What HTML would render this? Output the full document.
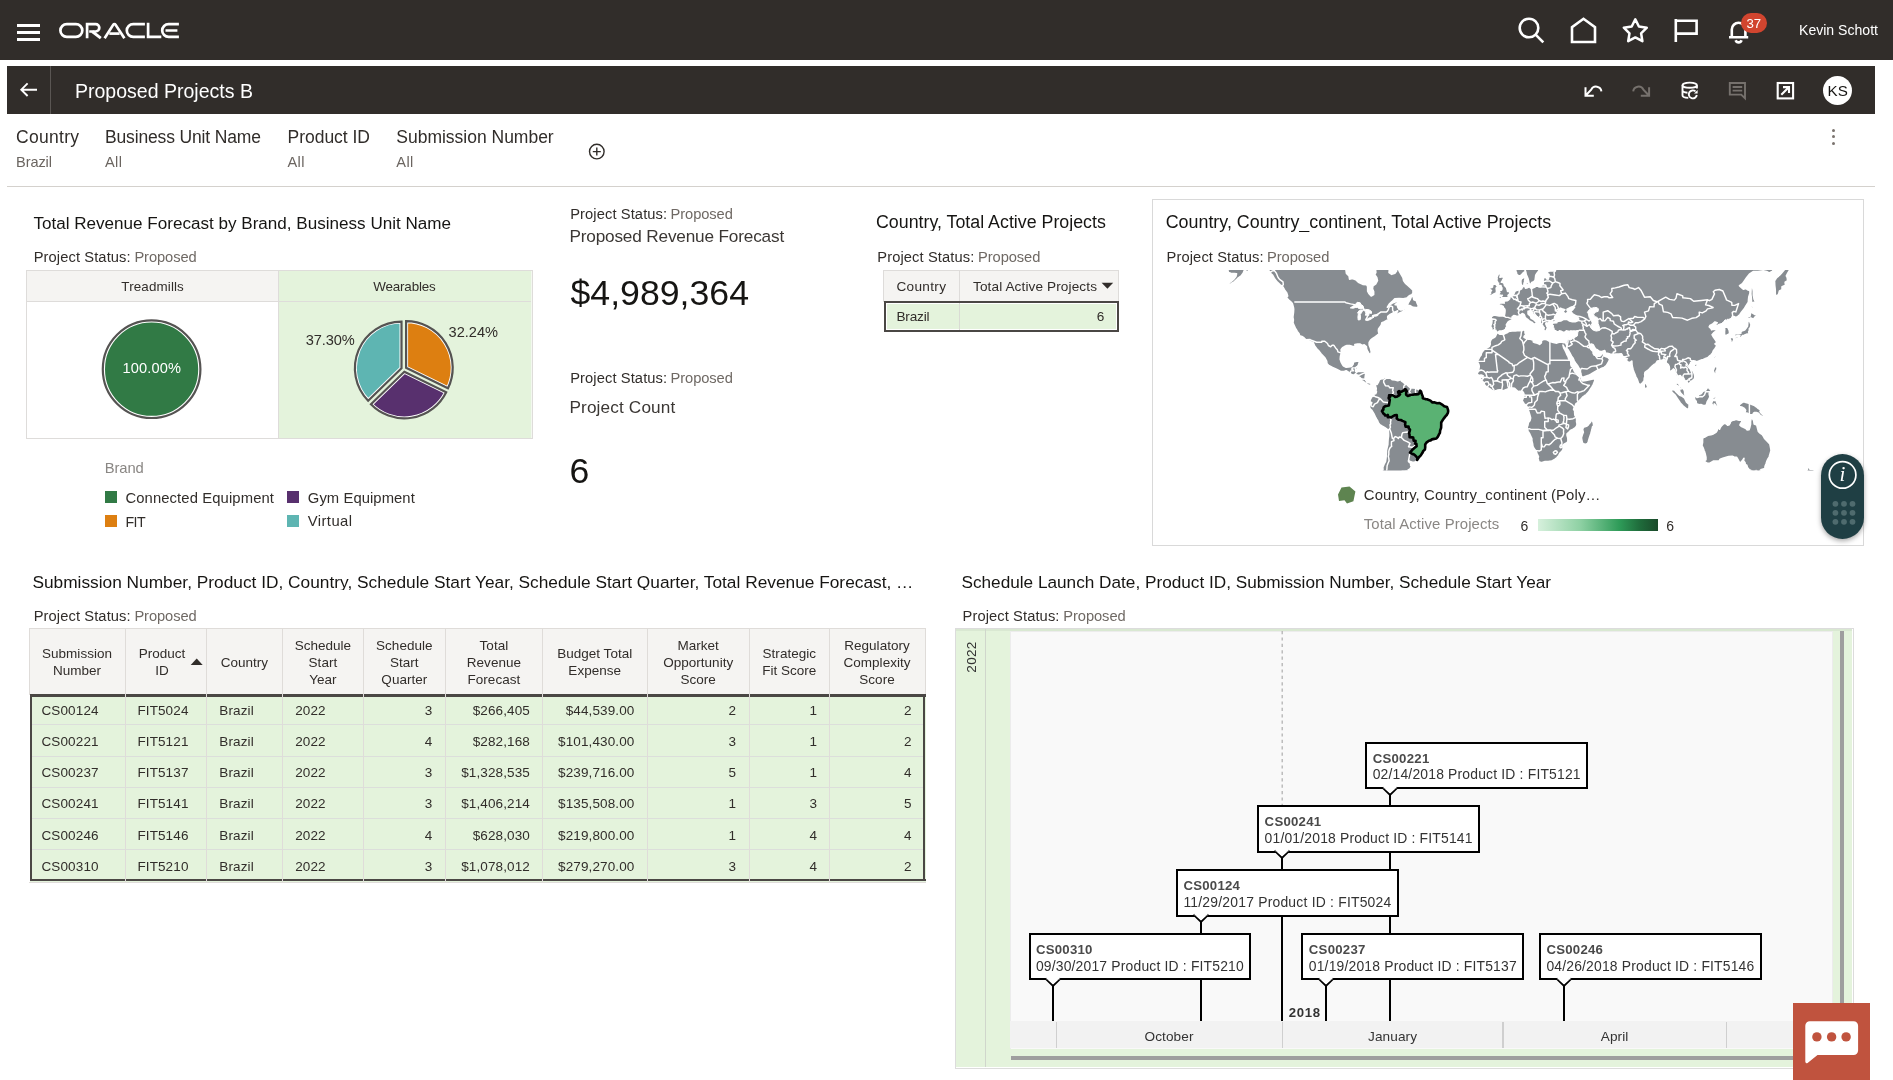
<!DOCTYPE html>
<html><head><meta charset="utf-8"><title>Proposed Projects B</title>
<style>
html,body{margin:0;padding:0;background:#fff;}
body{width:1893px;height:1080px;position:relative;overflow:hidden;font-family:"Liberation Sans",sans-serif;}
.bx{position:absolute;box-sizing:border-box;}
.t{position:absolute;white-space:nowrap;line-height:1;}
svg{overflow:visible;}
</style></head><body>
<div id="root" style="position:absolute;left:0;top:0;width:1893px;height:1080px;will-change:transform">
<!-- p_header -->
<div class="bx" style="left:0;top:0;width:1893px;height:59.5px;background:#312d2a"></div>
<div class="bx" style="left:17px;top:23.8px;width:23px;height:2.8px;background:#fff"></div>
<div class="bx" style="left:17px;top:30.9px;width:23px;height:2.8px;background:#fff"></div>
<div class="bx" style="left:17px;top:38.1px;width:23px;height:2.8px;background:#fff"></div>
<svg class="bx" style="left:55px;top:18px" width="130" height="26" viewBox="55 18 130 26" fill="none" stroke="#fff" stroke-width="2.7" stroke-linejoin="miter">
<rect x="60.4" y="24.1" width="21.9" height="12.8" rx="6.4"/>
<path d="M87.1 38.3V24.1H95.6a3.7 3.7 0 0 1 0 7.4H89.2"/>
<path d="M92.2 31.5L100.8 38.2" stroke-width="2.9"/>
<path d="M104.6 38.3L113.3 24.6a1.3 1.3 0 0 1 2.2 0L124.4 38.3" stroke-linejoin="round"/>
<path d="M109.3 33.6H119.6"/>
<path d="M144.9 24.1H133.2a6.4 6.4 0 0 0 0 12.8H144.9"/>
<path d="M148.1 22.8V36.9H161.3"/>
<path d="M178.9 24.1H168.6a6.4 6.4 0 0 0 0 12.8H178.9M165.5 30.5H177.4"/>
</svg>
<svg class="bx" style="left:1510px;top:10px" width="270" height="40" viewBox="1510 10 270 40" fill="none" stroke="#fff" stroke-width="2.6">
<circle cx="1529" cy="28" r="9.3"/><path d="M1535.6 34.6L1543.3 42.3"/>
<path d="M1572 42V27.2L1583.5 18.8L1595 27.2V42Z" stroke-linejoin="miter"/>
<path d="M1635.3 19.3L1638.9 26.5L1646.8 27.7L1641.1 33.3L1642.4 41.2L1635.3 37.4L1628.2 41.2L1629.5 33.3L1623.8 27.7L1631.7 26.5Z" stroke-width="2.5" stroke-linejoin="round"/>
<path d="M1675.8 19V42M1675.8 20.8H1696.6V33.6H1675.8"/>
<path d="M1729 37.2H1748.2M1731.8 37V29.5a6.8 6.8 0 0 1 13.6 0V37M1735.6 40.3a3.2 3.2 0 0 0 6 0" />
</svg>
<div class="bx" style="left:1740.5px;top:12.5px;width:26.5px;height:20.5px;border-radius:10.3px;background:#d1452f"></div>
<span class="t" style="left:1746.46px;top:16.88px;font-size:13.20px;color:#fff;">37</span>
<span class="t" style="left:1799.00px;top:23.34px;font-size:14.07px;color:#fff;">Kevin Schott</span>
<div class="bx" style="left:7px;top:66px;width:1868px;height:48px;background:#312d2a"></div>
<div class="bx" style="left:50px;top:66px;width:1px;height:48px;background:#5a5653"></div>
<svg class="bx" style="left:18px;top:80px" width="22" height="20" viewBox="18 80 22 20" fill="none" stroke="#fff" stroke-width="1.9"><path d="M37 89.7H21.5M27.6 83.4L21.3 89.7L27.6 96"/></svg>
<span class="t" style="left:75.00px;top:81.62px;font-size:19.53px;color:#fff;">Proposed Projects B</span>
<svg class="bx" style="left:1580px;top:76px" width="280" height="30" viewBox="1580 76 280 30" fill="none" stroke-width="2">
<g stroke="#fff">
<path d="M1585.5 87.2V95.7H1593.8M1585.9 95.3L1591.2 89.6a5.4 5.4 0 0 1 10.2 1.8"/>
</g>
<g stroke="#76716d">
<path d="M1649.1 87.2V95.7H1640.8M1648.7 95.3L1643.4 89.6a5.4 5.4 0 0 0-10.2 1.8"/>
</g>
<g stroke="#fff" stroke-width="1.9">
<ellipse cx="1689.7" cy="85.2" rx="7.2" ry="2.6"/>
<path d="M1682.5 85.2V95.2c0 1.4 2.6 2.5 5.8 2.7M1696.9 85.2V88.6M1682.5 90.2c0 1.2 2.2 2.2 5 2.5"/>
<path d="M1696.8 95a4 4 0 1 1-1.3-3.6" />
<path d="M1697.6 90V93.6H1694Z" fill="#fff" stroke="none"/>
</g>
<g stroke="#76716d" stroke-width="1.9">
<path d="M1729.8 83H1745V98.2L1741.2 94.6H1729.8Z"/><path d="M1732.6 87H1742.2M1732.6 90.6H1742.2"/>
</g>
<g stroke="#fff" stroke-width="2.1">
<rect x="1777.7" y="83" width="15.4" height="15.4"/><path d="M1781.3 94.8L1788.8 87.3M1783 87.1H1789V93.1"/>
</g>
</svg>
<div class="bx" style="left:1823px;top:75.5px;width:29px;height:29px;border-radius:50%;background:#fff"></div>
<span class="t" style="left:1827.56px;top:83.18px;font-size:15.20px;color:#161513;">KS</span>
<span class="t" style="left:16.00px;top:129.24px;font-size:17.50px;color:#312d2a;letter-spacing:0.287px;">Country</span>
<span class="t" style="left:16.00px;top:154.69px;font-size:14.60px;color:#6b6560;letter-spacing:-0.102px;">Brazil</span>
<span class="t" style="left:105.00px;top:129.24px;font-size:17.50px;color:#312d2a;letter-spacing:-0.149px;">Business Unit Name</span>
<span class="t" style="left:105.00px;top:154.69px;font-size:14.60px;color:#6b6560;letter-spacing:0.387px;">All</span>
<span class="t" style="left:287.50px;top:129.24px;font-size:17.50px;color:#312d2a;letter-spacing:-0.019px;">Product ID</span>
<span class="t" style="left:287.50px;top:154.69px;font-size:14.60px;color:#6b6560;letter-spacing:0.387px;">All</span>
<span class="t" style="left:396.30px;top:129.24px;font-size:17.50px;color:#312d2a;letter-spacing:-0.010px;">Submission Number</span>
<span class="t" style="left:396.30px;top:154.69px;font-size:14.60px;color:#6b6560;letter-spacing:0.387px;">All</span>
<svg class="bx" style="left:586px;top:141px" width="22" height="22" viewBox="586 141 22 22" fill="none" stroke="#312d2a" stroke-width="1.4"><circle cx="596.8" cy="151.6" r="7.3"/><path d="M596.8 147.6V155.6M592.8 151.6H600.8"/></svg>
<div class="bx" style="left:1832.2px;top:128.5px;width:3.2px;height:3.2px;border-radius:50%;background:#7a736e"></div>
<div class="bx" style="left:1832.2px;top:135.1px;width:3.2px;height:3.2px;border-radius:50%;background:#7a736e"></div>
<div class="bx" style="left:1832.2px;top:141.70000000000002px;width:3.2px;height:3.2px;border-radius:50%;background:#7a736e"></div>
<div class="bx" style="left:7px;top:186px;width:1868px;height:1px;background:#d4d1cd"></div>
<!-- p_pies -->
<div class="bx" style="left:33.4px;top:215.18px;height:16.72px;width:424.0px;overflow:hidden"><span class="t" style="left:0;top:0;font-size:17.09px;color:#161513">Total Revenue Forecast by Brand, Business Unit Name</span></div>
<span class="t" style="left:33.70px;top:250.41px;font-size:14.70px;color:#312d2a;letter-spacing:0.100px;">Project Status:</span><span class="t" style="left:134.40px;top:250.41px;font-size:14.70px;color:#6f6964;letter-spacing:-0.076px;">Proposed</span>
<div class="bx" style="left:26px;top:270px;width:507px;height:169px;border:1px solid #dedcda;background:#fff"></div>
<div class="bx" style="left:27px;top:271px;width:251px;height:30px;background:#f5f4f2"></div>
<div class="bx" style="left:279px;top:271px;width:252px;height:167px;background:#e4f3dc"></div>
<div class="bx" style="left:27px;top:301px;width:505px;height:1px;background:#dedcda"></div>
<div class="bx" style="left:278px;top:271px;width:1px;height:167px;background:#dedcda"></div>
<div class="bx" style="left:531px;top:271px;width:1px;height:167px;background:#f3f8ef"></div>
<span class="t" style="left:121.35px;top:280.41px;font-size:13.40px;color:#312d2a;letter-spacing:0.133px;">Treadmills</span>
<span class="t" style="left:373.25px;top:280.41px;font-size:13.40px;color:#312d2a;letter-spacing:-0.164px;">Wearables</span>
<svg class="bx" style="left:90px;top:310px" width="380" height="120" viewBox="90 310 380 120"><circle cx="151.6" cy="369.2" r="47.6" fill="#317a45" stroke="#fff" stroke-width="2"/><circle cx="151.6" cy="369.2" r="48.8" fill="none" stroke="#555352" stroke-width="2.2"/><defs><clipPath id="pc0"><path d="M406.11 367.82L406.11 321.22A46.6 46.6 0 0 1 447.97 388.30Z"/></clipPath><clipPath id="pc1"><path d="M404.31 371.77L446.17 392.24A46.6 46.6 0 0 1 370.96 404.31Z"/></clipPath><clipPath id="pc2"><path d="M401.50 368.19L368.15 400.74A46.6 46.6 0 0 1 401.50 321.59Z"/></clipPath></defs><path d="M406.11 367.82L406.11 321.22A46.6 46.6 0 0 1 447.97 388.30Z" fill="#dd7f11" stroke="#fff" stroke-width="4" clip-path="url(#pc0)"/><path d="M406.11 367.82L406.11 321.22A46.6 46.6 0 0 1 447.97 388.30Z" fill="none" stroke="#555352" stroke-width="2.2" stroke-linejoin="miter"/><path d="M404.31 371.77L446.17 392.24A46.6 46.6 0 0 1 370.96 404.31Z" fill="#58306e" stroke="#fff" stroke-width="4" clip-path="url(#pc1)"/><path d="M404.31 371.77L446.17 392.24A46.6 46.6 0 0 1 370.96 404.31Z" fill="none" stroke="#555352" stroke-width="2.2" stroke-linejoin="miter"/><path d="M401.50 368.19L368.15 400.74A46.6 46.6 0 0 1 401.50 321.59Z" fill="#5eb5b2" stroke="#fff" stroke-width="4" clip-path="url(#pc2)"/><path d="M401.50 368.19L368.15 400.74A46.6 46.6 0 0 1 401.50 321.59Z" fill="none" stroke="#555352" stroke-width="2.2" stroke-linejoin="miter"/></svg>
<span class="t" style="left:122.45px;top:361.39px;font-size:14.60px;color:#fff;letter-spacing:0.144px;">100.00%</span>
<span class="t" style="left:448.60px;top:325.09px;font-size:14.60px;color:#312d2a;letter-spacing:-0.024px;">32.24%</span>
<span class="t" style="left:305.70px;top:333.09px;font-size:14.60px;color:#312d2a;letter-spacing:-0.104px;">37.30%</span>
<span class="t" style="left:104.80px;top:461.12px;font-size:14.80px;color:#8a8784;letter-spacing:-0.124px;">Brand</span>
<div class="bx" style="left:104.8px;top:491px;width:12px;height:12px;background:#317a45"></div>
<div class="bx" style="left:286.8px;top:491px;width:12px;height:12px;background:#58306e"></div>
<div class="bx" style="left:104.8px;top:515px;width:12px;height:12px;background:#dd7f11"></div>
<div class="bx" style="left:286.8px;top:515px;width:12px;height:12px;background:#5eb5b2"></div>
<span class="t" style="left:125.40px;top:490.62px;font-size:14.80px;color:#312d2a;letter-spacing:0.119px;">Connected Equipment</span>
<span class="t" style="left:307.80px;top:490.62px;font-size:14.80px;color:#312d2a;letter-spacing:0.074px;">Gym Equipment</span>
<span class="t" style="left:125.40px;top:514.93px;font-size:14.20px;color:#312d2a;letter-spacing:-0.447px;">FIT</span>
<span class="t" style="left:307.80px;top:514.42px;font-size:14.80px;color:#312d2a;letter-spacing:0.419px;">Virtual</span>
<!-- p_kpi -->
<span class="t" style="left:570.20px;top:207.21px;font-size:14.70px;color:#312d2a;letter-spacing:0.100px;">Project Status:</span><span class="t" style="left:670.50px;top:207.21px;font-size:14.70px;color:#6f6964;letter-spacing:-0.076px;">Proposed</span>
<span class="t" style="left:569.40px;top:227.69px;font-size:17.20px;color:#3b3734;letter-spacing:-0.165px;">Proposed Revenue Forecast</span>
<span class="t" style="left:570.50px;top:275.96px;font-size:35.66px;color:#161513;">$4,989,364</span>
<span class="t" style="left:570.20px;top:370.91px;font-size:14.70px;color:#312d2a;letter-spacing:0.100px;">Project Status:</span><span class="t" style="left:670.50px;top:370.91px;font-size:14.70px;color:#6f6964;letter-spacing:-0.076px;">Proposed</span>
<span class="t" style="left:569.40px;top:398.89px;font-size:17.20px;color:#3b3734;letter-spacing:0.149px;">Project Count</span>
<span class="t" style="left:569.60px;top:454.21px;font-size:35.60px;color:#161513;">6</span>
<div class="bx" style="left:876px;top:214.17px;height:17.33px;width:236.0px;overflow:hidden"><span class="t" style="left:0;top:0;font-size:17.81px;color:#161513">Country, Total Active Projects</span></div>
<span class="t" style="left:877.30px;top:249.81px;font-size:14.70px;color:#312d2a;letter-spacing:0.100px;">Project Status:</span><span class="t" style="left:978.00px;top:249.81px;font-size:14.70px;color:#6f6964;letter-spacing:-0.076px;">Proposed</span>
<div class="bx" style="left:883px;top:270px;width:236px;height:32px;background:#f5f4f2;border:1px solid #dedcda"></div>
<div class="bx" style="left:959px;top:271px;width:1px;height:30px;background:#dedcda"></div>
<span class="t" style="left:896.40px;top:279.54px;font-size:13.60px;color:#312d2a;letter-spacing:0.330px;">Country</span>
<span class="t" style="left:973.00px;top:279.54px;font-size:13.60px;color:#312d2a;letter-spacing:0.115px;">Total Active Projects</span>
<svg class="bx" style="left:1101px;top:282px" width="13" height="8" viewBox="0 0 13 8"><path d="M0.6 0.8H12.2L6.4 6.7Z" fill="#312d2a"/></svg>
<div class="bx" style="left:884px;top:301px;width:234.5px;height:30.5px;background:#fff;border:2px solid #4a4744"></div>
<div class="bx" style="left:887px;top:304px;width:228.5px;height:24.5px;background:#e4f3dc"></div>
<div class="bx" style="left:959px;top:303px;width:1px;height:26.5px;background:#d9dbd4"></div>
<span class="t" style="left:896.40px;top:309.74px;font-size:13.60px;color:#312d2a;letter-spacing:-0.162px;">Brazil</span>
<span class="t" style="left:1096.74px;top:309.74px;font-size:13.60px;color:#312d2a;">6</span>
<!-- p_map -->
<div class="bx" style="left:1152px;top:199px;width:712px;height:347px;border:1px solid #d9d9d9;background:#fff"></div>
<div class="bx" style="left:1165.7px;top:214.33px;height:17.37px;width:391.5px;overflow:hidden"><span class="t" style="left:0;top:0;font-size:17.86px;color:#161513">Country, Country_continent, Total Active Projects</span></div>
<span class="t" style="left:1166.60px;top:250.01px;font-size:14.70px;color:#312d2a;letter-spacing:0.100px;">Project Status:</span><span class="t" style="left:1267.00px;top:250.01px;font-size:14.70px;color:#6f6964;letter-spacing:-0.076px;">Proposed</span>
<svg class="bx" style="left:1190px;top:270px" width="640" height="200.6" viewBox="1190 270 640 200.6"><defs><clipPath id="mapclip"><rect x="1190" y="270" width="640" height="200.6"/></clipPath></defs><g clip-path="url(#mapclip)"><path d="M1226.0 286.1L1230.8 284.0L1234.5 281.6L1237.7 278.5L1241.5 275.6L1243.2 273.3L1245.5 267.5L1227.4 267.5L1228.3 272.6L1230.8 273.3L1234.3 273.6L1236.5 273.9L1235.8 276.5L1233.8 279.1L1230.8 281.6L1227.4 284.0ZM1245.8 267.5L1245.6 271.6L1248.0 271.3L1249.8 269.6L1251.5 267.5ZM1266.4 267.1L1269.5 272.6L1272.5 275.2L1274.7 279.1L1277.3 282.2L1279.9 284.7L1282.8 287.0L1284.5 290.0L1286.7 293.1L1287.6 295.9L1286.4 297.5L1289.3 300.7L1291.6 302.6L1292.4 303.9L1293.3 307.2L1293.6 309.2L1293.4 312.6L1292.8 317.2L1293.3 320.0L1292.9 322.9L1294.0 325.4L1295.3 328.2L1296.4 330.0L1297.2 331.5L1299.0 333.8L1299.5 335.7L1301.9 336.5L1303.4 337.4L1305.6 339.6L1308.5 340.4L1309.9 341.5L1313.1 342.5L1314.6 345.9L1316.7 348.8L1319.4 351.7L1321.2 354.0L1324.8 357.8L1326.6 361.1L1326.9 363.5L1328.7 365.5L1332.5 367.5L1336.4 369.3L1340.3 371.3L1343.5 371.7L1346.1 370.8L1348.4 372.2L1350.2 373.8L1352.3 374.9L1354.9 375.7L1357.9 376.1L1358.4 376.6L1360.2 377.8L1361.6 379.3L1361.4 380.9L1363.1 381.4L1365.1 383.0L1366.5 384.2L1368.4 385.1L1370.1 385.6L1371.2 385.3L1371.0 384.0L1372.4 382.7L1374.1 383.7L1375.2 385.6L1376.2 383.4L1374.1 382.0L1372.2 381.6L1369.8 383.0L1367.7 382.5L1366.3 380.9L1365.2 379.3L1365.1 378.2L1365.4 375.6L1365.9 372.9L1363.7 371.5L1361.0 371.3L1358.1 371.3L1356.5 371.5L1357.0 369.3L1357.4 366.8L1358.4 364.8L1359.6 361.7L1357.5 360.9L1353.5 361.9L1353.0 364.2L1351.4 366.4L1348.8 366.8L1346.1 367.2L1343.8 366.1L1342.6 364.6L1341.2 362.0L1340.3 359.3L1340.5 356.5L1341.2 353.6L1341.3 351.7L1341.2 349.6L1342.6 347.8L1344.9 346.4L1347.0 345.5L1349.6 345.7L1352.3 346.4L1353.7 346.6L1355.3 346.6L1354.9 344.5L1357.5 344.1L1360.2 344.1L1362.3 345.5L1364.2 344.9L1366.3 346.6L1366.6 349.2L1367.7 351.5L1368.6 352.9L1369.6 354.2L1370.8 354.2L1371.3 351.7L1370.5 348.2L1369.2 344.9L1369.2 342.5L1370.6 340.2L1372.7 338.4L1375.0 337.0L1377.2 335.3L1379.1 334.0L1378.4 330.8L1378.6 329.1L1380.0 327.1L1381.4 324.9L1381.9 322.7L1384.5 321.8L1386.7 320.4L1388.8 320.0L1387.8 318.1L1387.8 316.5L1389.7 314.8L1392.2 313.6L1394.0 312.6L1395.7 311.7L1397.7 310.9L1395.3 315.0L1398.2 313.8L1400.8 312.6L1403.9 311.4L1405.9 309.7L1405.1 307.2L1403.4 309.7L1400.8 309.9L1398.7 308.9L1397.7 306.9L1397.4 304.9L1395.2 304.6L1398.6 302.6L1396.5 301.5L1393.1 302.6L1389.7 304.9L1387.4 307.2L1389.3 304.1L1392.2 301.5L1394.8 298.9L1399.1 298.6L1403.4 298.9L1406.8 298.1L1409.3 295.9L1411.9 294.8L1413.0 293.1L1413.0 290.2L1411.0 288.2L1408.5 285.8L1405.9 283.7L1403.7 280.7L1403.0 277.5L1401.1 274.3L1399.1 270.9L1398.2 267.1L1397.4 267.1L1396.5 270.9L1394.8 273.3L1391.7 274.3L1389.1 272.6L1389.5 267.1L1375.3 267.1L1375.8 272.6L1374.6 274.6L1376.7 277.5L1377.4 280.7L1375.8 283.7L1372.9 285.8L1372.4 288.8L1373.6 291.7L1373.6 294.5L1371.2 295.9L1368.9 293.4L1367.7 291.1L1367.7 286.7L1366.6 284.7L1362.8 284.3L1358.4 282.2L1355.8 279.7L1352.3 278.5L1349.6 279.1L1349.1 275.9L1346.5 273.3L1345.6 267.1ZM1407.1 305.7L1410.2 305.7L1413.0 307.4L1416.1 307.7L1417.8 307.9L1418.3 305.7L1417.3 303.4L1416.4 300.7L1413.9 299.7L1413.0 295.6L1411.3 296.7L1410.0 299.9L1408.5 302.3L1407.1 305.7ZM1376.2 383.4L1377.1 384.4L1378.4 382.1L1379.3 379.9L1380.5 379.0L1382.8 378.6L1385.0 377.6L1386.6 377.5L1386.4 378.1L1388.5 378.1L1389.1 377.9L1390.9 378.5L1392.2 379.7L1395.3 379.9L1397.7 380.7L1399.9 379.9L1402.7 379.7L1401.6 381.1L1404.2 382.7L1404.5 383.7L1406.2 383.9L1408.5 386.1L1410.5 387.9L1413.0 388.0L1416.1 388.2L1418.1 389.2L1420.0 390.5L1421.0 391.5L1422.0 394.8L1422.8 396.5L1422.8 398.2L1425.4 399.1L1427.0 399.2L1430.4 400.6L1432.4 402.5L1434.1 402.3L1437.1 403.2L1439.6 403.0L1442.1 404.6L1444.2 406.3L1447.0 407.0L1447.9 409.4L1448.2 411.1L1447.9 412.9L1446.7 415.0L1445.4 416.4L1444.1 418.1L1442.4 420.6L1441.2 422.5L1441.2 425.2L1441.1 427.9L1440.1 430.6L1439.9 432.8L1439.1 434.2L1437.9 436.6L1436.4 438.5L1434.2 438.9L1431.9 439.4L1430.6 440.4L1428.9 440.7L1426.4 442.6L1425.2 444.5L1425.2 447.4L1424.9 449.6L1423.3 450.9L1422.3 453.1L1420.8 455.3L1419.1 457.0L1417.1 459.8L1416.1 461.5L1414.4 462.3L1412.4 462.3L1409.6 461.3L1408.6 460.4L1408.6 461.7L1410.7 463.4L1410.7 465.3L1411.5 466.6L1410.0 469.0L1407.6 470.5L1404.2 471.2L1402.2 471.2L1402.0 474.5L1397.4 475.6L1397.4 485.1L1381.9 485.1L1382.4 473.4L1382.9 470.1L1382.8 467.2L1384.0 464.2L1385.4 461.5L1385.9 458.4L1386.2 455.3L1386.4 452.3L1386.4 450.4L1387.1 447.4L1387.8 444.5L1387.9 441.7L1388.1 438.9L1388.5 436.1L1388.5 433.3L1388.3 430.4L1386.6 429.0L1384.5 427.5L1381.9 426.1L1379.8 424.8L1378.1 422.5L1377.8 421.3L1376.4 419.0L1375.3 416.9L1374.1 414.3L1372.7 412.0L1371.7 410.3L1369.9 408.5L1369.4 406.8L1369.2 405.6L1370.6 404.2L1371.5 403.4L1371.7 402.5L1369.9 402.2L1370.1 399.9L1371.0 398.2L1371.5 396.8L1373.2 396.1L1373.6 395.4L1374.1 393.9L1375.8 393.6L1376.4 391.7L1375.8 390.5L1376.2 388.7L1375.8 387.0L1375.2 385.6ZM1496.8 333.0L1497.8 332.8L1500.0 334.2L1501.9 334.0L1503.5 334.5L1505.2 333.4L1506.9 332.8L1508.6 331.5L1512.1 330.8L1515.5 330.8L1518.9 330.4L1521.7 330.6L1523.8 329.8L1524.6 330.2L1525.8 330.4L1525.0 331.7L1525.1 333.0L1525.8 334.2L1525.5 335.3L1524.3 336.1L1524.1 337.2L1526.0 338.4L1526.7 338.6L1528.4 339.2L1529.6 339.0L1531.8 339.8L1533.2 340.2L1533.4 341.9L1535.3 342.7L1537.5 343.3L1539.6 344.3L1541.3 342.9L1541.5 340.4L1543.9 339.2L1546.6 339.6L1549.9 341.5L1553.3 342.3L1556.8 343.1L1558.5 342.3L1560.2 341.9L1561.9 342.1L1562.5 342.3L1564.5 342.7L1565.7 342.3L1566.9 345.9L1566.1 348.8L1564.7 348.2L1563.0 345.1L1563.7 347.8L1565.0 350.2L1566.2 352.7L1567.1 354.9L1568.1 356.6L1568.8 359.1L1570.4 360.2L1570.9 362.0L1570.9 364.6L1571.4 366.2L1573.1 367.5L1574.0 370.2L1574.8 371.8L1576.6 373.3L1578.3 375.0L1580.0 376.6L1581.2 377.3L1581.4 378.9L1582.6 380.8L1586.0 380.3L1589.5 379.6L1592.9 378.9L1595.0 378.4L1594.8 380.8L1593.4 384.3L1592.0 386.9L1590.3 389.5L1588.6 392.1L1586.0 394.9L1584.8 395.6L1582.6 397.3L1580.5 399.5L1578.5 401.9L1577.2 403.0L1576.0 403.8L1575.2 405.9L1574.3 407.6L1573.6 409.3L1574.7 410.9L1574.7 412.8L1575.0 415.4L1576.4 417.2L1576.7 419.8L1576.6 421.6L1577.1 424.2L1576.7 426.0L1575.4 427.8L1573.1 429.2L1570.5 430.5L1569.3 431.9L1567.1 433.8L1567.1 435.6L1567.8 437.8L1568.0 440.6L1567.4 442.5L1564.5 444.0L1563.0 445.3L1563.5 447.3L1562.8 450.2L1561.1 452.1L1560.2 452.9L1558.8 455.5L1556.8 457.8L1555.1 459.2L1552.5 460.8L1550.9 461.2L1548.2 461.5L1545.1 461.5L1541.3 462.9L1539.6 462.1L1538.5 461.7L1538.5 460.2L1537.9 458.6L1538.4 456.7L1537.2 454.1L1536.1 451.2L1535.3 450.4L1533.9 448.2L1532.9 446.3L1532.5 443.4L1531.8 440.6L1531.8 438.7L1530.6 436.0L1529.6 433.8L1528.1 431.4L1527.2 429.2L1527.2 426.9L1527.9 425.1L1528.4 422.4L1529.9 420.7L1530.6 418.0L1530.1 415.9L1529.6 414.2L1528.9 411.9L1528.1 409.5L1527.5 407.6L1526.7 406.2L1525.8 405.2L1524.1 403.8L1522.9 402.1L1522.0 400.2L1522.9 398.7L1523.4 397.3L1523.8 395.0L1523.8 393.7L1523.2 392.3L1522.2 391.3L1521.2 391.3L1519.8 391.4L1518.1 391.6L1516.4 390.0L1514.6 388.3L1512.7 388.0L1510.3 388.1L1508.6 388.7L1506.9 389.4L1505.2 390.0L1503.5 390.7L1501.7 390.2L1500.0 389.9L1497.4 390.2L1494.9 391.1L1494.0 391.4L1491.4 390.0L1489.7 388.8L1488.3 388.1L1487.1 387.1L1485.4 386.1L1484.2 384.3L1484.0 382.9L1483.2 382.2L1481.8 380.7L1480.9 379.6L1480.1 378.4L1478.2 377.5L1478.0 376.1L1478.2 375.0L1476.8 373.4L1478.0 372.0L1478.5 370.8L1478.9 368.4L1479.2 366.6L1479.0 365.0L1478.5 363.9L1477.6 362.2L1477.7 360.6L1478.9 358.3L1479.6 356.8L1481.1 354.9L1481.4 353.2L1482.1 352.1L1483.9 349.8L1484.7 349.0L1487.1 347.8L1489.4 346.3L1490.2 344.1L1490.0 341.9L1490.9 339.8L1492.3 338.2L1493.8 337.6L1495.2 336.5L1496.1 334.7ZM1591.7 419.8L1593.2 422.4L1593.8 425.6L1592.6 426.9L1591.9 430.1L1590.8 434.1L1589.5 437.8L1588.4 441.5L1587.7 443.4L1585.2 444.6L1582.6 443.4L1581.9 440.6L1581.4 437.8L1582.2 435.0L1583.3 432.3L1582.6 429.6L1583.4 427.2L1586.5 426.3L1588.1 425.1L1589.3 423.3L1590.3 422.3L1591.0 420.7ZM1515.3 267.1L1515.8 271.3L1516.4 272.6L1516.7 274.3L1518.3 275.6L1518.9 275.9L1520.7 275.6L1522.4 273.9L1523.6 272.6L1525.0 271.9L1525.1 270.2L1525.8 272.3L1526.2 274.6L1527.2 276.9L1528.1 279.1L1528.7 281.6L1529.1 283.4L1529.8 284.2L1531.3 284.0L1531.7 282.5L1533.6 281.8L1535.1 280.4L1535.5 277.5L1535.8 275.2L1537.0 273.3L1538.4 271.6L1539.4 269.6L1538.7 267.1ZM1556.8 267.1L1774.4 267.1L1772.6 271.3L1769.2 272.9L1766.6 271.6L1763.2 270.9L1758.0 271.6L1753.2 271.6L1749.4 274.3L1746.8 277.5L1744.6 280.7L1742.5 283.7L1739.6 285.8L1742.2 288.2L1743.4 289.1L1746.0 288.5L1748.2 290.0L1749.9 290.5L1750.1 293.1L1748.9 296.7L1748.6 299.4L1748.4 302.3L1746.0 305.9L1744.3 308.9L1741.7 312.1L1740.0 314.6L1737.4 316.9L1735.7 317.4L1733.9 316.5L1731.9 318.3L1730.0 320.4L1730.2 322.0L1727.1 323.8L1726.2 325.4L1727.7 327.1L1729.3 330.4L1729.6 332.6L1729.3 334.0L1727.1 335.1L1724.5 335.9L1724.5 333.6L1724.5 331.5L1724.7 329.5L1723.1 328.9L1721.9 328.2L1722.4 326.7L1722.2 324.9L1720.9 324.0L1718.5 324.9L1716.2 326.3L1715.5 324.7L1717.1 322.7L1715.0 322.0L1712.4 324.3L1709.9 325.6L1709.3 326.9L1711.2 328.7L1711.6 329.8L1713.8 329.1L1715.9 329.3L1717.8 329.8L1715.9 331.1L1714.0 332.6L1712.1 334.7L1713.3 336.8L1714.7 338.8L1716.4 341.3L1716.4 343.1L1715.0 343.9L1716.7 345.1L1716.1 347.2L1715.0 348.8L1713.3 351.1L1712.6 353.0L1711.1 354.9L1710.0 355.7L1708.1 357.4L1707.6 357.8L1704.7 358.9L1703.3 359.6L1702.1 359.8L1699.5 360.8L1697.0 361.7L1696.6 363.3L1695.8 361.3L1693.7 360.8L1692.7 361.1L1690.9 362.4L1690.3 363.9L1688.9 365.7L1690.1 367.9L1691.3 369.7L1693.2 371.1L1694.4 373.8L1694.9 376.4L1694.7 378.2L1694.0 379.4L1692.3 380.7L1690.9 381.2L1690.1 382.6L1688.4 383.8L1687.2 384.2L1687.3 382.1L1686.6 381.0L1685.1 380.8L1684.1 379.4L1683.2 378.0L1681.5 377.2L1680.4 375.7L1678.9 375.9L1678.7 378.2L1677.9 380.3L1677.5 382.9L1678.7 383.5L1679.4 385.2L1679.8 386.6L1681.5 387.3L1682.9 388.3L1684.4 390.4L1684.7 392.1L1684.7 393.8L1685.6 395.6L1686.1 396.6L1684.9 396.8L1683.2 395.6L1681.3 394.0L1679.9 392.1L1679.4 389.7L1679.1 387.8L1678.4 387.1L1677.2 385.5L1676.0 385.4L1676.0 383.5L1676.5 381.7L1676.3 379.1L1676.5 377.3L1675.8 374.7L1674.9 372.0L1674.8 370.2L1673.4 369.0L1672.4 370.2L1670.6 371.5L1669.1 371.1L1669.4 368.4L1669.1 366.4L1668.1 364.4L1666.7 363.3L1665.7 362.0L1665.0 360.2L1663.4 359.3L1662.6 360.2L1660.8 360.6L1659.1 360.8L1657.4 361.1L1656.5 362.4L1655.7 363.9L1654.0 364.6L1652.2 366.2L1650.2 368.1L1648.5 370.0L1646.6 371.3L1645.0 372.5L1644.7 374.7L1645.0 376.3L1644.3 378.2L1644.2 380.8L1642.8 382.6L1641.4 383.8L1640.2 385.0L1638.5 383.5L1638.0 381.7L1637.1 379.1L1635.7 376.6L1634.7 373.8L1633.8 372.0L1633.0 369.3L1632.1 365.7L1631.9 363.0L1631.8 361.1L1630.7 362.0L1629.0 362.6L1627.3 361.5L1625.6 359.6L1627.3 358.7L1625.2 358.0L1624.2 357.0L1622.8 356.5L1622.1 354.9L1621.3 353.8L1618.7 354.0L1616.1 354.2L1612.9 354.4L1610.1 354.0L1607.5 353.4L1605.5 353.0L1604.8 350.7L1602.4 351.3L1600.6 351.5L1598.9 351.1L1597.2 349.8L1595.5 349.0L1594.3 347.0L1593.2 344.9L1591.2 344.1L1590.3 345.1L1589.5 345.9L1590.0 347.2L1590.8 349.2L1592.0 350.4L1593.1 351.5L1593.2 353.4L1594.3 354.9L1594.6 354.6L1595.0 352.5L1595.7 354.0L1595.3 355.3L1597.2 356.1L1599.8 356.1L1600.6 355.5L1602.0 354.0L1603.2 352.7L1603.9 351.9L1603.9 354.6L1604.4 355.9L1606.7 357.0L1607.7 357.2L1609.8 359.3L1608.0 363.0L1606.3 365.7L1604.1 367.5L1601.8 368.4L1599.8 369.3L1597.2 370.4L1594.6 372.0L1591.2 374.1L1588.6 375.4L1584.3 376.8L1581.9 377.0L1581.2 375.6L1580.7 373.3L1580.2 370.6L1579.1 368.4L1577.8 366.1L1575.7 363.3L1574.3 361.1L1573.1 358.3L1571.4 355.9L1569.7 352.7L1568.0 349.8L1566.9 348.6L1566.9 345.9L1565.7 342.3L1566.2 341.7L1566.8 340.7L1567.1 339.2L1567.4 338.2L1568.0 337.0L1568.5 335.7L1568.6 333.6L1568.5 331.9L1569.2 331.3L1568.0 331.3L1566.4 330.8L1564.5 332.3L1562.8 332.3L1561.1 331.3L1559.5 330.8L1558.8 331.9L1557.1 331.9L1555.4 330.8L1554.0 330.4L1553.7 328.2L1552.5 327.4L1553.2 326.0L1552.0 324.9L1552.0 323.8L1553.3 322.9L1556.8 322.7L1556.8 321.6L1558.5 321.1L1561.1 320.9L1563.7 319.3L1567.1 319.3L1569.3 320.9L1572.3 321.6L1575.2 321.6L1578.3 320.4L1578.6 318.8L1577.4 316.9L1575.2 315.5L1572.3 313.6L1571.2 312.1L1570.2 311.4L1572.6 309.7L1574.5 307.2L1572.3 306.9L1569.7 307.9L1567.1 309.2L1567.1 310.4L1569.7 311.4L1567.8 312.1L1566.2 313.6L1564.5 313.4L1562.8 311.4L1564.9 309.7L1561.9 308.9L1560.2 308.2L1558.5 310.2L1558.0 311.7L1556.3 314.6L1555.9 316.0L1554.9 316.5L1554.5 318.1L1555.1 319.3L1555.4 320.4L1556.8 321.1L1556.6 321.6L1554.2 321.6L1552.7 322.7L1551.6 322.2L1549.9 321.8L1548.2 322.2L1548.2 323.4L1547.1 323.8L1546.3 322.7L1545.8 323.8L1546.5 325.4L1547.0 326.7L1548.2 327.8L1548.2 328.9L1547.3 328.2L1546.8 329.8L1546.1 330.8L1545.6 331.7L1544.2 330.8L1543.5 329.1L1544.2 327.8L1543.0 326.5L1542.5 325.4L1541.3 324.5L1540.3 322.9L1540.3 320.9L1540.3 319.5L1538.7 318.3L1537.0 316.9L1535.1 315.7L1533.0 314.1L1531.8 311.7L1530.8 312.6L1530.5 310.7L1528.1 311.4L1528.1 313.8L1528.6 314.6L1530.1 315.5L1531.3 318.3L1533.6 319.5L1534.8 319.5L1534.4 320.6L1536.1 321.6L1537.9 322.5L1538.7 323.6L1538.4 324.3L1537.7 323.4L1536.1 322.7L1535.5 324.3L1536.3 326.0L1535.3 327.4L1534.6 328.5L1533.7 328.2L1534.1 326.9L1534.6 326.0L1534.1 323.8L1532.7 323.4L1532.4 322.5L1531.3 322.0L1529.3 320.9L1527.9 319.7L1526.2 318.3L1525.0 317.2L1524.6 315.7L1524.1 314.6L1522.2 313.6L1520.7 314.8L1519.8 315.0L1518.3 316.5L1516.2 316.2L1513.8 315.7L1512.2 316.9L1512.4 318.3L1512.4 319.5L1510.7 320.6L1508.4 321.8L1506.9 324.0L1506.4 324.9L1507.2 326.5L1506.0 327.6L1505.7 329.1L1503.6 330.6L1501.7 331.1L1499.3 331.1L1497.8 332.3L1497.3 332.6L1496.1 331.5L1495.9 330.4L1494.2 330.0L1493.1 330.4L1491.6 330.4L1491.8 328.2L1490.7 326.7L1490.9 325.2L1491.6 323.4L1491.9 321.1L1491.6 319.0L1490.9 316.9L1492.6 315.7L1493.7 315.0L1496.6 315.5L1499.2 316.0L1500.4 315.7L1501.9 316.0L1503.8 316.0L1504.3 315.5L1504.8 312.9L1505.0 310.7L1504.8 309.2L1503.5 307.7L1503.1 306.4L1501.7 305.7L1499.3 305.2L1498.6 303.6L1500.9 302.6L1503.5 302.8L1504.1 303.1L1503.8 300.2L1504.8 301.0L1507.1 300.7L1508.6 299.7L1509.7 298.6L1509.7 297.0L1511.2 296.4L1512.7 295.6L1513.8 293.9L1514.8 291.4L1516.2 290.5L1518.8 290.0L1520.7 289.4L1521.7 288.5L1522.2 287.3L1521.7 285.6L1521.0 283.7L1520.8 280.7L1521.5 278.8L1523.9 277.2L1525.1 276.9L1525.0 279.1L1524.6 280.7L1525.6 281.0L1524.4 282.2L1523.9 284.3L1523.4 285.6L1524.1 286.7L1525.8 287.0L1525.6 288.2L1527.5 287.6L1529.3 286.7L1530.6 287.9L1531.5 288.5L1534.4 287.3L1536.1 286.1L1538.4 285.8L1539.1 287.0L1540.6 287.0L1541.3 285.6L1543.0 284.3L1543.2 283.1L1543.0 280.7L1543.7 277.8L1545.8 276.9L1546.8 278.8L1548.2 279.1L1548.9 276.5L1549.0 274.6L1547.3 273.6L1547.3 271.9L1549.4 270.9L1551.6 270.6L1555.1 270.9ZM1525.8 283.1L1527.2 282.2L1528.6 282.1L1528.6 283.4L1527.9 284.7L1527.5 285.6L1526.2 284.7ZM1776.4 297.0L1775.2 293.9L1775.2 289.7L1774.7 285.3L1774.5 280.7L1776.6 277.5L1779.5 275.2L1781.8 272.6L1784.7 269.2L1786.4 267.1L1792.4 267.1L1789.8 269.9L1788.1 272.6L1786.4 275.9L1787.3 277.5L1787.6 280.7L1785.2 282.2L1785.5 285.3L1782.1 286.7L1782.1 289.7L1779.5 291.1L1778.7 293.9ZM1751.1 287.3L1752.7 287.3L1753.4 291.1L1753.4 295.3L1754.2 299.4L1755.8 302.0L1752.9 302.6L1752.5 305.9L1753.7 307.7L1753.5 309.7L1752.0 308.2L1751.1 309.7L1751.0 305.9L1751.5 302.0L1751.3 298.1L1750.8 293.9L1751.0 290.2ZM1749.2 320.4L1750.3 322.7L1751.1 324.7L1750.5 327.6L1749.4 328.7L1749.4 330.6L1748.7 331.9L1749.2 333.2L1748.2 334.5L1747.2 334.0L1746.2 334.5L1745.6 335.5L1745.1 334.7L1744.6 335.5L1742.5 335.5L1742.4 336.1L1741.3 337.4L1740.5 338.0L1739.3 337.0L1739.4 336.1L1739.8 335.3L1738.2 335.3L1736.5 335.9L1734.8 336.1L1733.6 337.0L1732.2 337.0L1733.4 338.2L1733.9 339.2L1733.4 340.9L1732.9 342.1L1732.2 342.9L1730.8 342.3L1730.8 340.4L1730.2 339.4L1729.8 338.2L1731.2 337.4L1732.0 336.8L1732.9 335.7L1735.1 333.8L1736.2 333.6L1737.9 333.4L1739.6 333.2L1740.8 333.2L1740.8 331.9L1742.0 330.6L1743.1 329.3L1742.5 330.6L1744.6 330.0L1745.8 328.5L1747.4 326.3L1747.7 324.0L1747.7 322.5L1748.2 321.1ZM1734.1 338.0L1735.5 336.5L1737.0 335.9L1738.4 336.3L1738.6 337.2L1737.7 338.2L1736.2 338.0L1735.7 339.4L1734.6 338.8ZM1747.4 317.9L1748.2 316.2L1749.9 316.2L1750.5 313.4L1750.6 311.2L1752.7 313.1L1755.1 314.6L1756.8 313.8L1756.3 315.3L1757.7 316.2L1755.3 316.9L1753.4 319.3L1750.8 317.9L1749.4 318.6L1748.2 318.6L1749.4 319.7L1747.9 320.6ZM1497.1 299.1L1499.7 298.6L1500.9 298.9L1501.7 297.5L1503.5 297.8L1504.7 297.8L1507.4 297.5L1509.3 296.4L1509.3 295.6L1508.1 295.3L1509.7 293.9L1509.8 292.2L1509.1 291.4L1507.6 291.4L1507.4 290.2L1507.1 289.4L1506.7 287.9L1505.9 286.7L1504.5 285.3L1504.1 283.4L1503.5 282.8L1502.4 282.2L1501.4 282.2L1502.1 281.3L1502.8 280.0L1503.3 278.8L1503.8 277.5L1503.5 276.9L1501.2 276.9L1500.0 277.2L1500.2 275.9L1501.6 273.9L1498.3 273.9L1497.8 275.2L1496.9 277.2L1497.1 279.1L1496.2 280.0L1497.4 281.3L1497.3 284.0L1498.5 283.1L1498.5 285.3L1498.1 285.8L1499.3 286.1L1500.9 285.6L1501.1 286.7L1501.9 287.9L1501.7 289.7L1501.2 290.2L1499.5 290.2L1499.3 291.7L1499.8 292.5L1498.8 293.7L1497.8 294.2L1498.3 295.0L1499.7 295.0L1501.4 295.6L1502.3 295.3L1501.6 296.1L1499.7 296.1L1499.2 296.7L1498.3 298.3ZM1495.9 293.4L1496.6 291.4L1496.4 290.0L1496.2 288.2L1497.4 287.0L1497.1 285.8L1496.4 284.7L1494.3 284.0L1492.6 285.0L1491.9 286.4L1492.6 286.7L1492.1 287.3L1489.7 287.6L1489.7 289.4L1491.4 290.5L1490.6 291.4L1489.9 292.2L1490.6 293.1L1489.0 293.7L1489.4 294.8L1490.0 295.3L1492.3 295.0L1494.0 293.9ZM1644.3 382.4L1645.2 382.6L1646.6 384.3L1647.6 386.1L1647.4 387.8L1646.2 388.5L1644.8 388.7L1644.2 386.9L1644.2 385.2ZM1752.0 417.5L1753.7 420.7L1754.2 423.9L1756.8 425.1L1757.7 428.5L1758.4 431.4L1759.7 432.8L1762.3 434.5L1763.5 436.3L1764.6 438.5L1766.3 440.2L1768.0 441.9L1769.9 444.0L1770.4 446.3L1770.9 449.2L1771.1 450.6L1770.1 454.1L1769.2 457.1L1768.0 459.0L1767.1 460.8L1766.3 463.3L1765.1 466.3L1764.9 468.7L1761.5 469.5L1759.7 470.9L1758.7 472.2L1756.3 470.6L1753.7 471.5L1751.1 470.6L1749.2 469.8L1747.4 467.6L1746.8 465.4L1745.1 464.6L1745.1 462.9L1744.3 461.7L1743.9 463.5L1742.5 463.8L1743.4 461.2L1743.9 458.4L1742.5 460.6L1740.8 462.7L1739.4 462.3L1737.7 459.2L1736.5 457.3L1733.9 457.1L1732.2 456.3L1728.8 456.5L1725.3 457.6L1722.8 458.4L1720.2 459.2L1719.3 461.0L1716.7 461.0L1713.3 461.2L1709.9 463.3L1707.3 463.3L1704.9 461.9L1704.7 460.4L1705.9 459.8L1705.9 457.1L1705.2 454.1L1704.5 451.7L1704.0 450.6L1703.2 448.2L1701.9 445.7L1702.1 444.4L1702.5 442.5L1702.5 439.7L1702.6 438.4L1703.3 437.4L1704.4 437.2L1706.4 436.0L1707.8 435.2L1710.9 434.7L1713.3 433.9L1715.9 432.3L1717.1 430.5L1717.3 428.7L1718.5 427.8L1719.5 429.2L1720.2 427.4L1721.6 425.6L1723.3 423.9L1725.0 423.1L1726.7 424.2L1727.6 425.1L1728.8 424.9L1730.0 423.3L1730.5 421.6L1731.9 420.5L1733.1 420.1L1734.8 419.8L1733.9 418.6L1736.5 419.4L1739.1 420.1L1740.8 419.8L1742.2 420.1L1741.7 422.1L1740.6 423.7L1740.0 425.1L1741.7 426.5L1743.9 427.4L1746.0 428.5L1747.0 429.8L1749.1 429.6L1749.9 426.9L1750.5 424.2L1750.5 421.6L1750.8 419.8L1751.5 418.0ZM1803.9 462.1L1804.8 463.3L1807.0 465.9L1807.9 467.4L1809.3 467.6L1810.0 469.1L1812.2 469.5L1813.9 469.1L1813.6 471.1L1812.9 472.4L1811.3 472.8L1811.2 474.2L1808.4 477.8L1807.6 477.1L1808.1 474.9L1806.2 473.1L1807.2 471.5L1807.4 469.8L1807.0 467.8L1806.5 466.3L1804.6 463.8ZM1739.1 404.7L1741.7 402.8L1743.9 401.6L1746.0 402.4L1748.9 403.3L1749.4 403.5L1752.0 404.5L1754.6 405.5L1756.3 406.7L1757.7 408.0L1759.7 409.3L1761.1 410.6L1760.1 411.4L1761.8 413.7L1763.2 414.9L1764.9 416.3L1766.3 416.8L1764.9 417.3L1762.3 416.6L1760.1 415.4L1758.4 413.3L1756.3 412.5L1754.6 412.5L1753.4 413.5L1752.9 414.9L1750.3 414.9L1749.4 414.7L1747.7 413.3L1746.0 413.0L1744.3 413.5L1745.1 411.6L1745.6 410.2L1744.3 408.5L1741.7 407.1L1739.4 406.6ZM1694.4 396.4L1696.1 396.1L1698.2 396.6L1698.5 394.7L1701.3 393.5L1703.0 391.1L1705.6 390.4L1707.3 387.8L1708.7 387.1L1709.3 388.7L1711.9 390.0L1709.9 391.6L1709.2 393.8L1709.9 396.9L1709.0 399.0L1707.3 401.6L1706.4 405.0L1704.0 405.9L1701.3 404.7L1699.0 404.9L1696.4 403.8L1696.1 401.2L1694.6 399.5L1694.4 397.6ZM1670.8 389.4L1674.6 390.0L1676.7 392.5L1679.6 395.2L1681.7 395.9L1684.7 398.1L1686.6 402.1L1689.2 404.5L1688.9 409.0L1686.6 408.8L1682.9 405.9L1680.3 403.0L1677.4 398.7L1675.1 395.2L1672.0 392.5ZM1712.6 397.6L1714.7 396.8L1718.5 397.5L1721.6 396.2L1720.9 398.3L1715.9 398.1L1713.8 400.5L1715.9 400.7L1719.0 400.5L1716.6 402.3L1718.1 405.9L1717.1 407.3L1715.5 405.2L1714.2 404.0L1714.0 408.6L1712.4 408.5L1712.4 405.0L1711.4 403.6L1713.0 399.2ZM1714.3 366.6L1717.1 366.6L1717.1 369.3L1716.1 371.1L1716.1 374.1L1720.0 375.0L1720.4 377.2L1717.6 374.9L1714.8 375.0L1714.3 373.3L1713.1 370.8L1714.0 368.4ZM1715.0 354.6L1716.6 354.6L1715.9 357.4L1714.7 360.2L1713.5 358.3ZM1693.9 365.3L1695.4 363.9L1697.6 363.9L1697.0 366.1L1695.2 367.2Z" fill="#878c91" stroke="#fff" stroke-width="1.7" stroke-linejoin="round"/><path d="M1587.4 312.6L1588.6 310.4L1591.2 308.4L1594.6 307.4L1597.2 307.7L1598.4 308.9L1598.1 311.4L1595.5 312.1L1594.6 313.4L1593.4 313.8L1594.6 316.5L1597.2 317.4L1597.9 319.7L1598.1 323.8L1598.9 325.4L1599.6 328.2L1599.6 330.4L1596.3 331.1L1593.8 330.4L1592.0 329.3L1591.0 327.4L1591.2 325.4L1592.0 323.4L1592.0 322.2L1590.8 319.7L1589.1 317.4L1588.6 315.0L1588.1 313.4ZM1350.3 307.9L1353.2 308.2L1355.8 307.4L1357.5 307.4L1358.6 308.4L1362.8 308.4L1363.7 308.4L1363.1 305.9L1361.0 304.6L1360.2 302.8L1357.2 302.3L1355.3 304.6L1353.2 305.9ZM1358.2 320.0L1360.2 319.7L1360.5 316.9L1360.2 314.6L1361.9 312.1L1362.8 310.2L1361.0 309.9L1359.3 310.4L1357.5 313.1L1358.4 313.8L1357.9 316.9ZM1363.3 309.9L1365.4 309.4L1368.9 309.7L1371.5 311.4L1371.5 313.4L1369.2 313.1L1368.6 315.7L1367.3 316.9L1367.0 315.0L1365.4 315.3L1365.8 313.4L1365.6 311.7ZM1365.4 320.0L1367.2 320.6L1369.8 319.7L1372.4 318.3L1373.4 317.2L1371.2 317.4L1368.9 318.1L1366.8 319.3ZM1371.9 316.2L1373.2 316.2L1375.8 316.2L1377.9 315.5L1377.9 314.1L1375.8 314.6L1372.9 315.3ZM1363.0 360.6L1366.3 358.3L1370.6 358.0L1375.8 360.4L1380.2 362.6L1381.6 363.5L1376.7 364.2L1375.3 362.8L1369.8 360.4L1365.4 360.4ZM1731.7 318.3L1730.0 320.4L1730.2 322.0L1727.1 323.8L1726.2 325.4L1727.7 326.9L1725.3 327.6L1723.6 328.7L1723.1 328.9L1721.9 328.2L1722.4 326.7L1722.2 324.9L1720.9 324.0L1723.6 321.8L1725.2 319.7L1727.1 320.6L1727.1 319.3L1728.8 319.3L1731.5 318.3ZM1568.6 332.8L1569.9 332.1L1570.0 330.8L1572.3 330.8L1575.7 330.8L1579.8 330.2L1577.9 331.7L1577.4 335.9L1573.6 338.0L1570.2 340.2L1568.3 339.4L1568.5 338.2L1569.5 336.8L1568.8 335.5L1568.6 332.8Z" fill="#fff" stroke="#fff" stroke-width="1" stroke-linejoin="round"/><path d="M1294.8 302.0L1345.0 302.0L1345.9 302.8L1350.5 303.9L1354.7 304.6M1363.7 308.4L1363.3 309.9M1367.3 316.9L1365.9 319.3M1373.4 317.2L1372.9 315.7M1377.9 314.1L1380.7 312.1L1386.2 312.1L1387.4 311.2L1388.3 309.7L1388.8 307.9L1390.2 306.0L1391.7 306.3L1392.6 306.9L1392.6 310.2L1393.3 311.4L1394.0 312.4M1305.7 339.8L1310.1 339.4L1309.9 339.8L1316.6 342.3L1321.8 342.3L1321.8 341.3L1324.8 341.3L1327.5 343.5L1328.4 345.5L1330.7 346.8L1332.1 345.3L1333.9 345.3L1335.8 348.2L1337.3 349.8L1338.0 351.9L1340.8 352.9L1341.3 352.8M1264.4 267.1L1267.6 269.2L1270.4 272.6L1272.1 270.9L1274.4 270.6L1276.4 273.3L1278.1 277.5L1279.9 279.7L1283.0 281.9L1283.3 284.7L1282.3 285.8M1350.2 373.8L1350.2 372.4L1351.0 370.9L1353.3 370.9L1353.3 370.4L1351.6 368.9L1352.3 368.9L1352.3 367.9L1355.5 367.9L1355.5 367.6L1357.0 366.6M1355.5 367.9L1355.4 371.3L1356.0 371.3L1357.2 371.7M1353.9 375.1L1355.2 374.0L1357.2 371.7M1355.2 374.0L1356.7 374.9L1358.1 374.9L1357.9 376.1M1358.1 376.4L1359.8 375.0L1362.8 373.6L1365.9 372.9M1361.6 379.0L1365.2 379.3M1366.5 384.2L1367.1 381.7M1375.2 385.6L1376.2 383.4M1386.6 377.8L1385.4 379.0L1383.8 380.2L1383.6 382.1L1384.5 383.9L1385.4 385.8L1388.6 386.1L1389.8 387.7L1393.3 387.7L1392.6 390.5L1393.4 392.3L1392.6 393.4L1393.6 394.2L1394.2 396.1M1373.6 395.6L1375.5 396.8L1377.9 397.5L1379.7 398.4L1381.4 399.9L1383.3 402.0L1385.4 402.3L1388.3 402.5L1388.8 405.4M1371.0 404.1L1371.0 405.8L1373.2 406.8L1374.5 404.1L1377.4 402.7L1379.7 398.4M1389.5 417.1L1391.0 419.9L1390.5 422.0L1390.7 423.9L1390.0 424.8L1390.2 426.4L1390.5 427.0L1389.7 428.8L1388.1 430.3M1389.7 428.8L1390.7 431.5L1391.4 433.3L1391.9 436.1L1392.4 438.5L1393.6 438.5L1395.3 436.6L1397.0 437.2L1398.4 438.5L1399.3 437.0L1401.4 437.5L1402.0 434.2L1402.8 432.6L1407.4 432.0L1409.0 433.0M1393.6 438.5L1394.0 440.7L1391.5 441.7L1391.4 445.1L1391.7 446.5L1390.3 447.4L1389.3 449.4L1388.8 451.3L1388.8 454.3L1388.3 456.3L1388.8 458.4L1389.1 460.9L1388.1 463.0L1387.1 465.7L1386.9 469.0L1386.4 472.3M1401.4 437.5L1404.2 440.4L1407.6 441.9L1410.0 443.4L1408.5 446.8L1411.9 447.2L1412.9 447.0L1414.9 445.5L1415.1 443.8M1409.9 452.7L1409.5 455.3L1409.1 457.4L1408.6 460.2M1406.1 383.9L1403.9 386.1L1403.7 387.9L1404.7 389.2M1410.7 388.0L1410.5 389.6L1409.3 391.3L1410.2 393.0L1411.9 394.8M1416.1 388.4L1415.4 390.5L1415.7 393.0L1415.1 394.2M1503.1 334.5L1504.0 336.8L1504.8 339.8L1501.7 341.3L1500.7 343.1L1498.3 344.9L1495.7 345.7L1492.0 347.4L1492.0 350.2L1498.6 354.6L1508.9 361.9L1509.0 362.6L1512.4 364.2L1512.6 365.7L1514.2 365.4L1516.9 364.8L1519.7 362.3L1527.5 357.4L1524.6 355.5L1523.2 352.3L1523.9 349.8L1523.8 347.2L1523.3 344.5L1522.4 341.1L1519.8 338.4L1521.0 335.7L1521.2 333.6L1521.7 330.6M1523.3 344.5L1524.6 341.9L1526.7 339.8L1526.8 338.5M1492.0 349.4L1484.2 349.4M1492.0 350.2L1492.0 352.7L1486.3 352.7L1486.3 357.5L1484.5 358.3L1484.4 361.4L1477.7 361.4M1498.6 354.6L1495.5 354.6L1497.3 370.2L1497.7 370.6L1497.4 372.0L1490.9 372.0L1488.5 372.2L1487.1 371.8L1485.9 373.3M1549.9 341.6L1549.9 360.2L1570.4 360.2M1549.9 360.2L1549.9 363.9L1548.2 363.9L1548.2 364.8L1534.4 357.5L1532.7 358.3L1531.3 359.1L1527.5 357.4M1532.7 358.3L1533.6 362.0L1533.7 363.9L1533.6 369.5L1530.1 373.8L1530.3 375.2M1548.2 364.8L1548.2 371.7L1546.3 372.0L1545.6 374.7L1544.7 376.4L1545.6 380.0L1546.3 380.1M1546.3 380.1L1547.3 383.5L1549.0 383.8L1552.5 382.6L1555.1 382.8L1556.8 382.2L1558.5 382.1L1560.2 382.1L1561.9 378.2L1564.0 377.9L1563.7 380.8L1565.6 382.6M1565.6 382.6L1565.9 380.7L1567.1 379.1L1569.0 377.0L1569.5 374.1L1570.5 369.3L1573.3 367.5M1569.8 374.2L1572.1 373.1L1574.0 373.6L1576.0 374.0L1578.3 375.9L1579.8 377.3L1578.8 380.0L1580.9 380.0L1581.3 379.1M1580.9 380.0L1580.5 381.2L1581.9 382.8L1582.6 383.5L1587.7 385.2L1589.4 385.2L1584.2 390.6L1580.9 391.8L1579.0 392.2L1577.1 391.8L1574.8 393.1L1572.3 392.8L1568.8 391.3L1568.6 391.1L1567.6 389.7L1566.6 387.4L1563.7 385.5L1565.6 382.6M1579.0 392.2L1577.4 394.2L1577.4 399.0L1577.4 400.5L1578.4 401.8M1574.3 407.1L1571.7 404.3L1565.4 400.7L1559.4 400.7M1565.4 400.7L1565.2 398.8L1566.2 397.1L1567.1 395.7L1566.1 392.6L1565.4 391.8L1568.6 391.1M1565.4 391.8L1561.9 392.8L1560.0 393.0L1558.5 391.4L1555.7 391.6L1554.0 390.2L1552.5 388.7L1550.2 386.1L1547.3 383.5M1546.3 380.1L1544.2 380.7L1539.6 383.5L1537.0 385.4L1533.6 386.1M1554.0 390.2L1550.8 390.0L1547.1 391.1L1545.4 391.9L1542.2 391.4L1538.9 391.6L1538.9 393.0L1537.5 397.3L1537.3 399.9L1534.8 402.4L1534.4 405.0L1533.2 406.4L1531.7 407.4L1529.4 406.9L1527.9 407.6M1533.6 386.1L1531.8 388.7L1532.0 390.6L1532.9 392.5L1534.6 395.2L1538.9 393.0M1533.6 386.1L1532.7 383.5L1531.0 381.7L1532.9 381.7L1532.7 378.6L1531.8 376.8L1530.3 375.2M1531.3 377.3L1529.8 381.7L1528.4 384.2L1527.2 386.9L1525.0 387.1L1523.2 388.0L1521.7 390.7M1530.3 375.2L1527.5 376.3L1524.1 375.9L1520.7 375.9L1518.8 376.4L1516.4 374.9L1514.0 375.6L1513.1 378.7L1513.4 380.8L1511.7 383.5L1511.5 386.9L1511.5 388.0M1509.7 388.3L1509.7 383.5L1508.3 381.0L1508.4 380.0M1509.0 388.5L1507.9 386.1L1507.6 383.5L1506.9 380.7L1506.6 379.8M1501.6 390.2L1502.1 387.8L1502.6 384.8L1502.3 382.6L1502.1 380.0L1506.9 379.8L1508.4 380.0L1509.3 379.3L1511.0 378.4L1513.1 378.7M1494.0 391.5L1493.8 389.5L1492.5 387.8L1492.3 385.9L1493.7 384.5L1493.1 381.4L1496.2 380.8L1497.4 381.0L1500.0 382.1L1502.1 382.4M1497.4 380.9L1497.8 378.6L1499.3 377.0L1500.9 375.9L1502.6 374.3L1505.7 372.8L1507.3 373.0L1508.6 372.9L1512.9 372.2L1514.1 370.2L1514.2 365.4M1507.3 373.0L1507.2 374.7L1508.6 376.4L1510.7 377.5L1511.0 378.4M1478.5 371.1L1481.1 370.0L1483.7 370.9L1485.9 373.3L1487.3 377.5L1483.3 377.2L1478.2 377.6M1483.3 377.2L1483.3 378.7L1481.1 380.1M1487.3 377.5L1489.7 378.2L1491.4 377.5L1492.6 379.4L1493.1 381.4M1484.0 383.5L1485.4 381.9L1488.0 381.7L1488.7 383.5L1489.2 384.5L1487.1 387.1M1489.2 384.5L1490.7 384.5L1490.9 386.2L1492.3 385.9M1478.0 375.4L1481.1 375.0L1483.2 375.7L1481.1 376.1L1478.0 376.3M1523.8 395.0L1526.3 395.2L1529.8 395.2L1531.8 395.2L1534.6 395.2M1523.8 397.3L1526.3 397.3L1526.3 395.2M1529.8 395.2L1529.6 396.9L1531.5 396.9L1531.8 399.9L1531.7 402.4L1528.4 403.0L1527.0 404.2L1526.0 405.8M1528.1 409.2L1529.3 409.2L1535.5 409.2L1537.2 413.0L1540.3 412.8L1541.3 411.1L1544.4 411.6L1544.6 415.4L1545.1 418.4L1548.2 417.9L1548.2 421.6L1544.7 421.6L1544.7 427.2L1547.1 429.8M1527.2 429.1L1529.3 428.7L1531.0 429.4L1538.7 429.4L1543.0 430.5L1547.1 429.8L1550.3 430.1M1543.0 431.0L1543.0 437.8L1541.3 437.8L1541.3 443.1L1541.3 450.0L1539.6 451.0L1536.8 450.6L1535.3 450.4M1543.0 431.0L1547.0 430.5L1549.0 430.5L1550.3 430.1M1541.3 443.1L1542.5 446.9L1544.2 446.9L1545.9 444.4L1549.0 444.8L1551.3 443.1L1553.2 441.0L1555.1 439.3L1557.5 438.2L1560.7 438.5M1557.5 438.2L1555.1 436.9L1554.5 435.0L1552.0 432.3L1550.3 430.1L1553.3 430.3L1556.4 427.8L1559.2 426.2M1560.7 438.5L1562.6 436.5L1563.7 433.8L1563.5 431.4L1563.7 429.2L1561.9 427.6L1559.2 426.2L1558.8 425.1L1561.1 424.4L1564.0 423.3M1560.7 438.5L1561.9 442.5L1561.8 445.1L1562.1 446.9L1563.5 447.0M1559.9 446.9L1560.4 445.1L1561.8 445.1L1562.1 446.9L1560.7 447.8L1559.9 446.9M1553.3 452.3L1555.1 450.8L1556.6 451.0L1557.5 452.3L1555.7 454.3L1554.0 453.7L1553.3 452.3M1548.2 417.9L1550.4 418.4L1551.6 419.6L1553.7 419.1L1555.7 420.5L1556.8 422.3L1558.2 422.3L1558.2 420.1L1555.7 419.4L1556.1 415.1L1556.6 413.7L1559.8 413.2L1563.5 415.2L1565.4 415.4M1563.5 415.2L1564.0 417.7L1563.7 420.7L1563.1 422.6L1564.0 423.3L1566.2 424.2L1568.6 424.9L1568.5 426.9L1567.6 428.9L1565.9 427.4L1566.4 425.1L1566.4 423.3L1566.9 418.9L1566.4 415.4M1576.4 417.2L1573.1 418.7L1569.7 419.3L1566.9 418.9M1559.8 413.2L1557.6 410.2L1557.8 406.6L1556.8 403.6L1557.1 401.8L1557.8 401.4L1558.3 397.6L1560.7 395.2L1560.0 393.0M1557.8 406.6L1559.9 404.7L1559.9 403.0L1559.4 400.8L1557.8 401.4M1556.8 403.6L1559.9 403.1M1491.6 319.5L1492.8 319.0L1495.5 319.5L1496.2 320.2L1495.0 321.6L1495.2 323.8L1494.0 324.7L1494.9 326.0L1494.3 327.4L1494.9 328.2L1494.2 330.0M1503.8 316.1L1505.7 317.2L1508.1 317.4L1509.8 318.1L1512.4 318.3M1511.3 296.4L1512.4 297.5L1514.1 299.4L1515.2 299.1L1516.9 300.6L1517.9 300.7L1518.6 301.5L1521.0 302.0L1520.0 305.7L1517.4 308.9L1518.6 308.7L1518.9 309.9L1518.9 311.7L1518.3 312.1L1518.9 314.1L1519.8 315.0M1512.7 295.6L1514.3 295.6L1515.5 295.3L1516.9 296.1L1516.7 297.2L1517.2 297.4L1517.2 294.5L1518.6 293.9L1519.1 292.5L1519.3 290.5M1517.2 297.4L1517.7 298.6L1517.4 299.1L1516.9 300.6M1517.4 299.1L1518.1 299.9L1517.9 300.7M1521.7 285.6L1523.2 285.8M1531.5 288.5L1531.7 291.1L1532.0 292.5L1532.2 295.3L1532.7 296.7L1532.4 297.1L1531.5 296.7L1529.3 298.1L1527.7 298.6L1528.4 300.2L1530.6 302.6L1529.3 303.9L1529.3 305.7L1527.9 305.7L1525.0 305.9L1523.4 305.9L1521.5 305.7L1520.0 305.7M1518.9 309.9L1520.7 309.7L1521.5 308.9L1522.4 309.9L1522.9 308.7L1524.3 308.9L1524.9 307.6L1523.2 306.9L1523.4 305.9M1524.9 307.6L1525.8 307.7L1527.9 307.2L1528.2 307.9L1530.5 308.4L1530.3 309.9L1530.6 310.7M1530.5 308.4L1532.0 308.7L1534.6 307.6L1535.3 306.2L1536.3 304.6L1536.0 303.1L1532.7 302.0L1530.6 302.6M1532.4 297.1L1534.4 297.8L1536.0 298.3L1537.3 298.6L1539.3 300.7L1537.9 302.0L1536.1 303.1M1539.3 300.7L1541.0 301.5L1543.0 301.0L1545.7 301.8L1545.9 300.5L1548.4 297.2L1547.5 295.3L1547.7 293.7L1546.8 293.1L1548.0 292.0L1547.3 288.5L1546.1 287.0L1541.0 286.9M1546.1 287.0L1545.8 285.3L1543.5 284.7M1543.1 281.9L1546.3 281.0L1549.7 281.0L1552.7 283.1L1551.3 285.6L1550.8 287.6L1547.3 288.5M1548.9 276.2L1551.6 276.5L1553.9 277.3L1554.5 274.9L1554.0 272.6L1555.1 270.9M1553.9 277.3L1554.7 278.5L1555.4 281.6L1552.7 283.1M1555.4 281.6L1558.5 282.8L1560.0 283.4L1559.9 285.8L1561.9 288.2L1563.1 290.0L1560.7 290.8L1561.6 293.7L1559.4 295.6L1555.1 295.0L1549.9 294.2L1547.5 295.3M1561.6 293.7L1565.4 293.1L1568.0 296.7L1568.8 298.6L1572.3 299.7L1575.9 300.5L1575.4 304.6L1572.8 306.7M1545.7 301.8L1545.0 303.6L1546.3 304.6L1549.7 305.4L1552.7 304.0L1554.2 303.4L1557.0 304.9L1558.3 307.7L1558.7 308.7L1555.4 310.9L1558.0 311.7M1552.7 304.0L1555.2 307.4L1555.4 310.9M1536.3 304.6L1539.2 305.2L1542.2 303.4L1545.0 303.6M1546.3 304.6L1543.4 308.7L1541.8 309.3L1539.4 309.9L1536.7 309.9L1535.3 308.4L1534.6 307.6M1530.3 310.9L1533.2 310.9L1533.9 309.2L1535.3 308.4M1534.0 312.6L1534.8 311.7L1536.1 311.7L1539.2 312.1L1539.6 312.4L1540.3 314.1L1540.4 315.7L1538.7 317.9M1534.0 312.6L1535.3 314.8L1537.2 316.9L1538.7 318.1M1539.4 309.9L1539.6 312.4M1541.8 309.3L1543.7 311.7L1545.6 312.9L1545.9 314.1L1545.4 316.5L1545.4 318.6L1546.3 320.8M1545.9 314.1L1548.2 315.3L1551.6 314.8L1553.9 314.3L1556.1 315.3M1546.3 320.8L1549.0 320.4L1551.6 320.9L1552.2 320.0L1554.2 319.3L1555.1 319.3M1552.2 320.0L1552.7 320.9L1551.6 322.1M1541.3 324.5L1542.3 323.6L1543.0 321.9L1546.3 320.8M1540.3 319.6L1541.3 318.1L1542.3 319.3L1545.4 318.6M1542.3 319.3L1542.2 320.9L1543.0 321.9M1540.4 315.7L1541.8 317.4L1541.3 318.1M1578.3 320.4L1581.7 321.3L1582.1 323.6L1584.0 324.5L1582.6 325.2L1583.4 327.6L1583.1 328.5L1584.0 330.0L1579.8 330.2M1575.7 316.0L1580.0 316.5L1583.4 317.6L1586.7 319.5L1589.1 321.1L1590.5 319.7M1581.7 321.3L1584.3 320.9L1586.7 319.5M1584.3 320.9L1586.0 323.1L1586.9 326.3M1584.0 324.5L1586.9 326.3L1589.5 324.5L1591.0 327.4M1568.0 339.5L1568.0 341.9L1567.1 345.8M1565.8 342.3L1566.9 345.9M1567.3 338.6L1568.6 338.2L1569.9 336.3L1568.8 335.4M1567.1 346.1L1569.0 346.4L1571.4 344.9L1572.3 343.9L1570.5 341.9L1574.0 340.9L1574.3 340.5L1573.6 338.0M1574.3 340.5L1576.4 341.1L1579.1 342.7L1583.8 346.4L1586.9 346.6L1588.9 344.7L1589.5 344.9M1586.9 346.6L1588.6 347.8L1590.1 347.7M1584.0 330.0L1585.0 332.6L1586.0 334.2L1585.0 336.8L1586.2 338.8L1588.9 341.1L1588.9 342.9L1590.3 345.0M1580.5 370.4L1581.2 368.6L1582.9 368.6L1587.2 369.0L1589.5 367.5L1591.4 366.4L1596.3 365.7L1601.5 363.9L1602.7 360.2L1601.8 358.9L1597.4 358.5L1595.7 356.1M1596.3 365.7L1598.2 370.0M1601.8 358.9L1602.9 356.5L1603.9 354.8M1594.3 355.0L1595.3 355.3M1599.6 329.7L1602.2 328.0L1605.3 327.8L1608.9 329.3L1612.2 331.3L1612.2 333.4L1611.0 335.7L1611.6 337.8L1611.1 340.4L1613.2 342.1L1611.6 345.2L1613.0 347.4L1614.9 348.4L1615.6 350.4L1615.6 351.5L1613.4 352.3L1612.9 354.2M1611.6 345.2L1614.4 346.1L1617.5 345.9L1620.9 345.1L1621.1 343.1L1623.9 341.3L1626.1 341.1L1626.4 338.8L1627.8 338.2L1627.3 336.8L1629.2 336.5L1630.1 333.6L1629.9 331.9L1633.3 330.6L1635.2 330.4L1635.7 330.0M1612.2 333.4L1614.1 334.0L1615.6 333.0L1617.8 331.9L1618.4 330.2L1619.7 329.8L1621.3 329.7L1623.5 330.0L1625.4 329.8L1626.4 329.1L1627.6 329.1L1627.8 328.2L1629.5 327.6L1630.1 330.4L1631.9 330.4L1633.0 329.4L1635.7 329.9M1621.3 329.7L1621.3 328.2L1617.3 326.0L1614.2 323.8L1613.4 321.3L1610.3 320.6L1610.1 318.8L1607.7 317.4L1604.9 320.9L1603.2 320.9L1603.2 312.1L1607.7 310.7L1611.8 313.6L1613.5 315.7L1618.5 315.3L1620.6 316.9L1620.6 319.3L1621.5 321.1L1623.9 321.6L1628.8 318.6L1629.0 318.7L1633.3 318.3L1634.7 316.5L1637.3 317.2L1643.1 317.4L1644.8 318.8M1603.2 320.9L1602.2 320.9L1600.1 318.6L1597.0 319.8M1644.8 318.8L1641.1 321.6L1638.5 322.7L1635.6 322.7L1633.8 324.7L1633.5 325.2L1635.7 327.1L1635.7 329.9M1633.5 325.2L1630.2 325.2L1628.2 323.8L1626.4 324.7L1624.9 324.7L1622.8 325.4L1624.0 326.3L1623.5 330.0M1628.2 323.8L1628.5 322.0L1630.7 322.7L1632.8 322.0L1629.0 318.7M1591.5 308.7L1590.3 308.2L1587.7 304.6L1586.9 303.4L1587.7 301.5L1587.6 299.4L1590.3 299.4L1592.0 297.2L1594.3 294.8L1598.9 295.9L1601.5 297.5L1604.1 296.7L1607.5 296.7L1609.2 297.8L1612.7 297.5L1610.1 293.9L1612.0 291.1L1611.8 288.5L1615.3 287.9L1619.0 287.0L1624.2 285.3L1627.8 284.7L1629.2 287.6L1633.1 288.5L1634.9 289.4L1638.5 287.6L1640.9 290.2L1644.5 297.2L1650.3 296.7L1653.4 300.5L1657.1 301.8M1657.1 301.8L1654.3 303.6L1654.0 306.9L1649.7 306.7L1648.5 310.9L1644.5 312.1L1645.9 316.5L1644.8 318.8M1657.9 301.5L1661.2 299.7L1665.7 297.2L1669.6 299.4L1674.3 300.1L1676.0 298.1L1677.0 293.7L1682.7 295.9L1682.9 297.8L1690.4 298.6L1693.7 301.3L1701.3 300.5L1707.6 299.8M1657.9 301.5L1659.3 304.1L1662.2 305.4L1663.4 311.7L1667.7 312.4L1671.0 313.8L1672.7 317.6L1679.4 317.9L1682.0 318.1L1687.5 320.2L1691.8 318.3L1696.1 317.6L1699.4 315.3L1699.2 312.1L1702.3 312.9L1706.1 310.9L1707.5 308.9L1712.8 307.9L1713.1 307.4L1708.8 305.5L1705.6 304.9L1706.4 302.6L1707.6 299.8M1707.6 299.8L1709.5 300.7L1711.9 299.4L1714.5 293.9L1713.3 291.7L1715.0 290.2L1719.3 289.5L1722.9 291.0L1726.2 298.9L1726.4 299.9L1731.7 302.3L1732.0 305.4L1734.8 305.4L1738.6 303.6L1735.8 311.9L1733.6 311.4L1732.2 312.6L1732.7 315.7L1731.5 318.3M1723.6 328.7L1725.3 327.6L1727.7 326.9M1692.7 361.1L1690.4 360.2L1690.3 358.5L1688.0 357.8L1685.6 359.1L1682.7 359.5L1682.0 361.7L1681.0 361.0L1678.9 360.8L1677.5 360.0L1677.2 358.1L1676.8 356.3L1674.8 356.5L1676.7 353.0L1676.5 349.6L1674.6 348.2M1674.6 348.2L1673.7 349.4L1672.2 350.4L1670.5 351.7L1669.6 354.2L1669.8 356.5L1667.4 356.5L1667.4 358.3L1666.2 361.5L1665.7 362.4M1681.0 361.0L1679.1 363.2L1677.2 364.2L1675.5 364.4L1674.9 366.6L1676.5 370.0L1675.8 372.5L1677.5 375.6L1677.4 378.7L1676.5 381.7M1679.1 363.2L1679.8 364.6L1681.0 364.8L1680.6 368.1L1682.5 367.2L1683.9 367.7L1685.8 367.0L1687.2 368.6L1687.0 370.6L1688.5 372.2L1687.8 374.1L1684.1 374.1L1683.2 375.4L1682.9 376.4L1683.9 378.8M1682.7 359.5L1683.4 360.8L1685.8 362.2L1687.3 364.4L1685.8 365.0L1687.8 366.2L1690.3 369.3L1691.8 372.9L1692.0 373.6L1691.8 377.7L1689.0 378.7L1689.6 380.0L1687.7 380.1L1686.6 381.0M1692.0 373.6L1689.2 374.0L1687.8 374.1M1679.1 387.9L1680.8 389.2L1682.5 388.3M1624.2 357.0L1627.3 356.1L1629.0 355.7L1627.3 353.2L1627.8 351.5L1626.4 350.7L1628.0 348.8L1630.6 348.8L1632.5 346.4L1633.1 345.0L1635.2 342.7L1634.9 340.9L1636.4 340.2L1634.2 338.4L1634.2 335.3L1639.0 333.4L1640.7 333.6M1635.7 330.0L1637.6 332.6L1640.7 333.6L1642.6 336.1L1642.6 338.8L1643.1 339.8L1642.3 341.9L1646.2 344.5L1648.1 344.3L1651.7 347.0L1654.8 348.8L1658.4 349.0L1659.8 350.2L1661.2 348.4L1664.5 349.0L1666.9 347.8L1669.4 346.4L1672.0 346.1L1673.7 347.8L1674.6 348.2M1645.0 344.9L1644.7 347.2L1647.9 349.0L1650.2 350.2L1653.1 351.3L1658.4 351.9L1658.4 349.0M1659.8 350.2L1659.8 350.9L1661.7 351.3L1665.3 350.9L1664.5 349.0M1660.2 360.6L1659.5 358.0L1659.5 355.9L1658.4 354.8L1658.9 351.9L1661.4 352.3L1661.4 354.0L1665.8 354.6L1663.9 356.5L1663.9 358.0L1665.7 357.4L1666.2 361.5M1749.4 403.5L1749.4 414.7M1695.4 395.6L1697.0 397.5L1699.9 396.6L1702.5 396.8L1704.5 395.0L1705.7 391.8L1709.0 391.8" fill="none" stroke="#fff" stroke-width="1.45" stroke-linejoin="round" stroke-linecap="round"/><path d="M1420.1 390.6L1419.5 392.7L1418.4 394.1L1416.1 394.4L1415.1 394.2L1412.9 394.8L1411.9 394.8L1410.5 394.8L1409.3 395.6L1407.8 396.0L1406.4 395.0L1406.1 394.2L1406.2 392.3L1406.8 391.3L1405.9 389.6L1405.6 389.2L1404.7 389.2L1404.2 390.5L1402.5 391.1L1401.3 391.8L1399.9 391.5L1399.1 391.1L1398.1 391.8L1398.7 393.9L1400.1 394.2L1399.1 395.4L1397.4 396.3L1396.5 396.8L1395.2 396.9L1394.2 396.1L1392.4 395.2L1390.0 395.3L1389.1 395.3L1389.1 396.4L1390.2 396.5L1389.8 397.2L1388.7 397.3L1388.7 398.5L1389.5 399.1L1389.8 399.9L1388.9 405.4L1387.3 405.8L1385.4 406.1L1383.8 407.2L1383.3 408.5L1383.4 409.6L1382.4 410.3L1381.9 411.1L1382.4 411.8L1383.6 413.7L1384.8 414.6L1385.0 415.5L1387.1 415.5L1387.8 414.8L1387.8 417.2L1389.5 417.1L1391.2 417.4L1392.2 416.7L1394.5 415.3L1396.7 415.0L1396.9 416.9L1396.7 418.5L1398.4 419.7L1400.8 420.0L1402.5 420.9L1404.2 421.6L1405.4 422.2L1405.1 424.5L1405.6 426.6L1408.6 426.6L1408.8 428.4L1410.0 429.7L1409.6 431.5L1409.0 433.0L1409.5 434.6L1409.6 437.2L1411.9 437.4L1413.2 437.6L1413.4 438.9L1413.7 440.7L1415.6 440.9L1415.1 443.8L1416.4 443.8L1416.6 446.3L1414.4 448.0L1412.7 449.4L1410.0 452.7L1412.7 454.1L1413.4 454.1L1415.1 455.3L1416.8 457.2L1417.4 457.8L1417.1 459.9L1419.1 457.0L1420.8 455.3L1422.3 453.1L1423.3 450.9L1424.9 449.6L1425.2 447.4L1425.2 444.5L1426.4 442.6L1428.9 440.7L1430.6 440.4L1431.9 439.4L1434.2 438.9L1436.4 438.5L1437.9 436.6L1439.1 434.2L1439.9 432.8L1440.1 430.6L1441.1 427.9L1441.2 425.2L1441.2 422.5L1442.4 420.6L1444.1 418.1L1445.4 416.4L1446.7 415.0L1447.9 412.9L1448.2 411.1L1447.9 409.4L1447.0 407.0L1444.2 406.3L1442.1 404.6L1439.6 403.0L1437.1 403.2L1434.1 402.3L1432.4 402.5L1430.4 400.6L1427.0 399.2L1425.4 399.1L1422.8 398.2L1422.8 396.5L1422.0 394.8L1421.0 391.5Z" fill="#5ab273" stroke="#000" stroke-width="2.6" stroke-linejoin="round"/></g></svg>
<svg class="bx" style="left:1336px;top:485px" width="22" height="20" viewBox="1336 485 22 20"><path d="M1341.5 487.5L1349.5 486.6L1355.4 491.5L1353.4 501.2L1347 503.6L1344.5 500.3L1339 501L1338 494.5Z" fill="#5e8450"/></svg>
<span class="t" style="left:1363.80px;top:488.34px;font-size:14.90px;color:#312d2a;letter-spacing:0.107px;">Country, Country_continent (Poly…</span>
<span class="t" style="left:1363.80px;top:517.34px;font-size:14.90px;color:#8a8784;letter-spacing:0.108px;">Total Active Projects</span>
<span class="t" style="left:1520.60px;top:519.00px;font-size:14.00px;color:#312d2a;">6</span>
<span class="t" style="left:1666.20px;top:519.00px;font-size:14.00px;color:#312d2a;">6</span>
<div class="bx" style="left:1538px;top:519.3px;width:120.2px;height:11.8px;background:linear-gradient(90deg,#d6f0dc 0%,#8fd1a4 35%,#2e9b58 68%,#1f6b3b 85%,#1a4a2a 100%)"></div>
<div class="bx" style="left:1821px;top:453.6px;width:43.4px;height:85.8px;border-radius:21.7px;background:#1f3f44;box-shadow:0 2px 5px rgba(0,0,0,0.35)"></div>
<svg class="bx" style="left:1821px;top:453px" width="44" height="87" viewBox="1821 453 44 87"><circle cx="1842.6" cy="474.9" r="13.3" fill="none" stroke="#fff" stroke-width="1.7"/><circle cx="1835.4" cy="503.8" r="2.9" fill="#4f6b6e"/><circle cx="1835.4" cy="512.8" r="2.9" fill="#4f6b6e"/><circle cx="1835.4" cy="521.8" r="2.9" fill="#4f6b6e"/><circle cx="1844" cy="503.8" r="2.9" fill="#4f6b6e"/><circle cx="1844" cy="512.8" r="2.9" fill="#4f6b6e"/><circle cx="1844" cy="521.8" r="2.9" fill="#4f6b6e"/><circle cx="1852.5" cy="503.8" r="2.9" fill="#4f6b6e"/><circle cx="1852.5" cy="512.8" r="2.9" fill="#4f6b6e"/><circle cx="1852.5" cy="521.8" r="2.9" fill="#4f6b6e"/></svg>
<span class="t" style="left:1839.4px;top:463.8px;font-size:21px;color:#fff;font-family:'Liberation Serif',serif;font-style:italic">i</span>
<!-- p_table -->
<div class="bx" style="left:32.4px;top:573.50px;height:16.90px;width:884.0px;overflow:hidden"><span class="t" style="left:0;top:0;font-size:17.31px;color:#161513">Submission Number, Product ID, Country, Schedule Start Year, Schedule Start Quarter, Total Revenue Forecast, …</span></div>
<span class="t" style="left:33.70px;top:609.31px;font-size:14.70px;color:#312d2a;letter-spacing:0.100px;">Project Status:</span><span class="t" style="left:134.40px;top:609.31px;font-size:14.70px;color:#6f6964;letter-spacing:-0.076px;">Proposed</span>
<div class="bx" style="left:29px;top:628px;width:897px;height:67px;background:#f5f4f2;border:1px solid #dfdcd9"></div>
<div class="bx" style="left:30px;top:694px;width:895.5px;height:187.5px;background:#e4f3dc"></div>
<div class="bx" style="left:32px;top:723.8px;width:891.5px;height:1px;background:#dcdedb"></div>
<div class="bx" style="left:32px;top:755.7px;width:891.5px;height:1px;background:#dcdedb"></div>
<div class="bx" style="left:32px;top:786.7px;width:891.5px;height:1px;background:#dcdedb"></div>
<div class="bx" style="left:32px;top:818.1px;width:891.5px;height:1px;background:#dcdedb"></div>
<div class="bx" style="left:32px;top:849.1px;width:891.5px;height:1px;background:#dcdedb"></div>
<div class="bx" style="left:30px;top:694.2px;width:895.5px;height:2.6px;background:#4a4744"></div>
<div class="bx" style="left:30px;top:878.8px;width:895.5px;height:2.6px;background:#4a4744"></div>
<div class="bx" style="left:30px;top:694.2px;width:2.3px;height:187px;background:#4a4744"></div>
<div class="bx" style="left:923.2px;top:694.2px;width:2.3px;height:187px;background:#4a4744"></div>
<div class="bx" style="left:29px;top:881.6px;width:897px;height:1px;background:#dfdcd9"></div>
<div class="bx" style="left:125.0px;top:629px;width:1px;height:252.5px;background:#dfdcd9"></div>
<div class="bx" style="left:206.0px;top:629px;width:1px;height:252.5px;background:#dfdcd9"></div>
<div class="bx" style="left:282.0px;top:629px;width:1px;height:252.5px;background:#dfdcd9"></div>
<div class="bx" style="left:362.8px;top:629px;width:1px;height:252.5px;background:#dfdcd9"></div>
<div class="bx" style="left:444.9px;top:629px;width:1px;height:252.5px;background:#dfdcd9"></div>
<div class="bx" style="left:541.8px;top:629px;width:1px;height:252.5px;background:#dfdcd9"></div>
<div class="bx" style="left:646.7px;top:629px;width:1px;height:252.5px;background:#dfdcd9"></div>
<div class="bx" style="left:748.7px;top:629px;width:1px;height:252.5px;background:#dfdcd9"></div>
<div class="bx" style="left:829.0px;top:629px;width:1px;height:252.5px;background:#dfdcd9"></div>
<span class="t" style="left:42.02px;top:647.12px;font-size:13.50px;color:#312d2a;letter-spacing:0.020px;">Submission</span>
<span class="t" style="left:52.94px;top:664.02px;font-size:13.50px;color:#312d2a;letter-spacing:0.020px;">Number</span>
<span class="t" style="left:138.68px;top:647.12px;font-size:13.50px;color:#312d2a;letter-spacing:0.020px;">Product</span>
<span class="t" style="left:155.24px;top:664.02px;font-size:13.50px;color:#312d2a;letter-spacing:0.020px;">ID</span>
<span class="t" style="left:220.70px;top:655.62px;font-size:13.50px;color:#312d2a;letter-spacing:0.020px;">Country</span>
<span class="t" style="left:294.68px;top:638.92px;font-size:13.50px;color:#312d2a;letter-spacing:0.020px;">Schedule</span>
<span class="t" style="left:308.60px;top:655.72px;font-size:13.50px;color:#312d2a;letter-spacing:0.020px;">Start</span>
<span class="t" style="left:309.23px;top:672.72px;font-size:13.50px;color:#312d2a;letter-spacing:0.020px;">Year</span>
<span class="t" style="left:376.08px;top:638.92px;font-size:13.50px;color:#312d2a;letter-spacing:0.020px;">Schedule</span>
<span class="t" style="left:390.00px;top:655.72px;font-size:13.50px;color:#312d2a;letter-spacing:0.020px;">Start</span>
<span class="t" style="left:381.36px;top:672.72px;font-size:13.50px;color:#312d2a;letter-spacing:0.020px;">Quarter</span>
<span class="t" style="left:479.60px;top:638.92px;font-size:13.50px;color:#312d2a;letter-spacing:0.020px;">Total</span>
<span class="t" style="left:466.82px;top:655.72px;font-size:13.50px;color:#312d2a;letter-spacing:0.020px;">Revenue</span>
<span class="t" style="left:467.57px;top:672.72px;font-size:13.50px;color:#312d2a;letter-spacing:0.020px;">Forecast</span>
<span class="t" style="left:557.18px;top:647.12px;font-size:13.50px;color:#312d2a;letter-spacing:0.020px;">Budget Total</span>
<span class="t" style="left:568.37px;top:664.02px;font-size:13.50px;color:#312d2a;letter-spacing:0.020px;">Expense</span>
<span class="t" style="left:677.52px;top:638.92px;font-size:13.50px;color:#312d2a;letter-spacing:0.020px;">Market</span>
<span class="t" style="left:663.21px;top:655.72px;font-size:13.50px;color:#312d2a;letter-spacing:0.020px;">Opportunity</span>
<span class="t" style="left:680.53px;top:672.72px;font-size:13.50px;color:#312d2a;letter-spacing:0.020px;">Score</span>
<span class="t" style="left:762.58px;top:647.12px;font-size:13.50px;color:#312d2a;letter-spacing:0.020px;">Strategic</span>
<span class="t" style="left:762.21px;top:664.02px;font-size:13.50px;color:#312d2a;letter-spacing:0.020px;">Fit Score</span>
<span class="t" style="left:844.27px;top:638.92px;font-size:13.50px;color:#312d2a;letter-spacing:0.020px;">Regulatory</span>
<span class="t" style="left:843.52px;top:655.72px;font-size:13.50px;color:#312d2a;letter-spacing:0.020px;">Complexity</span>
<span class="t" style="left:859.33px;top:672.72px;font-size:13.50px;color:#312d2a;letter-spacing:0.020px;">Score</span>
<svg class="bx" style="left:190px;top:658px" width="14" height="8" viewBox="0 0 14 8"><path d="M0.7 7L6.7 0.6L12.7 7Z" fill="#312d2a"/></svg>
<span class="t" style="left:41.50px;top:704.12px;font-size:13.50px;color:#312d2a;letter-spacing:0.120px;">CS00124</span>
<span class="t" style="left:137.40px;top:704.12px;font-size:13.50px;color:#312d2a;letter-spacing:0.120px;">FIT5024</span>
<span class="t" style="left:219.30px;top:704.12px;font-size:13.50px;color:#312d2a;letter-spacing:0.120px;">Brazil</span>
<span class="t" style="left:295.20px;top:704.12px;font-size:13.50px;color:#312d2a;letter-spacing:0.120px;">2022</span>
<span class="t" style="left:424.79px;top:704.12px;font-size:13.50px;color:#312d2a;letter-spacing:0.120px;">3</span>
<span class="t" style="left:472.65px;top:704.12px;font-size:13.50px;color:#312d2a;letter-spacing:0.120px;">$266,405</span>
<span class="t" style="left:565.65px;top:704.12px;font-size:13.50px;color:#312d2a;letter-spacing:0.120px;">$44,539.00</span>
<span class="t" style="left:728.59px;top:704.12px;font-size:13.50px;color:#312d2a;letter-spacing:0.120px;">2</span>
<span class="t" style="left:809.49px;top:704.12px;font-size:13.50px;color:#312d2a;letter-spacing:0.120px;">1</span>
<span class="t" style="left:903.89px;top:704.12px;font-size:13.50px;color:#312d2a;letter-spacing:0.120px;">2</span>
<span class="t" style="left:41.50px;top:735.22px;font-size:13.50px;color:#312d2a;letter-spacing:0.120px;">CS00221</span>
<span class="t" style="left:137.40px;top:735.22px;font-size:13.50px;color:#312d2a;letter-spacing:0.120px;">FIT5121</span>
<span class="t" style="left:219.30px;top:735.22px;font-size:13.50px;color:#312d2a;letter-spacing:0.120px;">Brazil</span>
<span class="t" style="left:295.20px;top:735.22px;font-size:13.50px;color:#312d2a;letter-spacing:0.120px;">2022</span>
<span class="t" style="left:424.79px;top:735.22px;font-size:13.50px;color:#312d2a;letter-spacing:0.120px;">4</span>
<span class="t" style="left:472.65px;top:735.22px;font-size:13.50px;color:#312d2a;letter-spacing:0.120px;">$282,168</span>
<span class="t" style="left:558.02px;top:735.22px;font-size:13.50px;color:#312d2a;letter-spacing:0.120px;">$101,430.00</span>
<span class="t" style="left:728.59px;top:735.22px;font-size:13.50px;color:#312d2a;letter-spacing:0.120px;">3</span>
<span class="t" style="left:809.49px;top:735.22px;font-size:13.50px;color:#312d2a;letter-spacing:0.120px;">1</span>
<span class="t" style="left:903.89px;top:735.22px;font-size:13.50px;color:#312d2a;letter-spacing:0.120px;">2</span>
<span class="t" style="left:41.50px;top:766.22px;font-size:13.50px;color:#312d2a;letter-spacing:0.120px;">CS00237</span>
<span class="t" style="left:137.40px;top:766.22px;font-size:13.50px;color:#312d2a;letter-spacing:0.120px;">FIT5137</span>
<span class="t" style="left:219.30px;top:766.22px;font-size:13.50px;color:#312d2a;letter-spacing:0.120px;">Brazil</span>
<span class="t" style="left:295.20px;top:766.22px;font-size:13.50px;color:#312d2a;letter-spacing:0.120px;">2022</span>
<span class="t" style="left:424.79px;top:766.22px;font-size:13.50px;color:#312d2a;letter-spacing:0.120px;">3</span>
<span class="t" style="left:461.15px;top:766.22px;font-size:13.50px;color:#312d2a;letter-spacing:0.120px;">$1,328,535</span>
<span class="t" style="left:558.02px;top:766.22px;font-size:13.50px;color:#312d2a;letter-spacing:0.120px;">$239,716.00</span>
<span class="t" style="left:728.59px;top:766.22px;font-size:13.50px;color:#312d2a;letter-spacing:0.120px;">5</span>
<span class="t" style="left:809.49px;top:766.22px;font-size:13.50px;color:#312d2a;letter-spacing:0.120px;">1</span>
<span class="t" style="left:903.89px;top:766.22px;font-size:13.50px;color:#312d2a;letter-spacing:0.120px;">4</span>
<span class="t" style="left:41.50px;top:797.22px;font-size:13.50px;color:#312d2a;letter-spacing:0.120px;">CS00241</span>
<span class="t" style="left:137.40px;top:797.22px;font-size:13.50px;color:#312d2a;letter-spacing:0.120px;">FIT5141</span>
<span class="t" style="left:219.30px;top:797.22px;font-size:13.50px;color:#312d2a;letter-spacing:0.120px;">Brazil</span>
<span class="t" style="left:295.20px;top:797.22px;font-size:13.50px;color:#312d2a;letter-spacing:0.120px;">2022</span>
<span class="t" style="left:424.79px;top:797.22px;font-size:13.50px;color:#312d2a;letter-spacing:0.120px;">3</span>
<span class="t" style="left:461.15px;top:797.22px;font-size:13.50px;color:#312d2a;letter-spacing:0.120px;">$1,406,214</span>
<span class="t" style="left:558.02px;top:797.22px;font-size:13.50px;color:#312d2a;letter-spacing:0.120px;">$135,508.00</span>
<span class="t" style="left:728.59px;top:797.22px;font-size:13.50px;color:#312d2a;letter-spacing:0.120px;">1</span>
<span class="t" style="left:809.49px;top:797.22px;font-size:13.50px;color:#312d2a;letter-spacing:0.120px;">3</span>
<span class="t" style="left:903.89px;top:797.22px;font-size:13.50px;color:#312d2a;letter-spacing:0.120px;">5</span>
<span class="t" style="left:41.50px;top:829.02px;font-size:13.50px;color:#312d2a;letter-spacing:0.120px;">CS00246</span>
<span class="t" style="left:137.40px;top:829.02px;font-size:13.50px;color:#312d2a;letter-spacing:0.120px;">FIT5146</span>
<span class="t" style="left:219.30px;top:829.02px;font-size:13.50px;color:#312d2a;letter-spacing:0.120px;">Brazil</span>
<span class="t" style="left:295.20px;top:829.02px;font-size:13.50px;color:#312d2a;letter-spacing:0.120px;">2022</span>
<span class="t" style="left:424.79px;top:829.02px;font-size:13.50px;color:#312d2a;letter-spacing:0.120px;">4</span>
<span class="t" style="left:472.65px;top:829.02px;font-size:13.50px;color:#312d2a;letter-spacing:0.120px;">$628,030</span>
<span class="t" style="left:558.02px;top:829.02px;font-size:13.50px;color:#312d2a;letter-spacing:0.120px;">$219,800.00</span>
<span class="t" style="left:728.59px;top:829.02px;font-size:13.50px;color:#312d2a;letter-spacing:0.120px;">1</span>
<span class="t" style="left:809.49px;top:829.02px;font-size:13.50px;color:#312d2a;letter-spacing:0.120px;">4</span>
<span class="t" style="left:903.89px;top:829.02px;font-size:13.50px;color:#312d2a;letter-spacing:0.120px;">4</span>
<span class="t" style="left:41.50px;top:860.02px;font-size:13.50px;color:#312d2a;letter-spacing:0.120px;">CS00310</span>
<span class="t" style="left:137.40px;top:860.02px;font-size:13.50px;color:#312d2a;letter-spacing:0.120px;">FIT5210</span>
<span class="t" style="left:219.30px;top:860.02px;font-size:13.50px;color:#312d2a;letter-spacing:0.120px;">Brazil</span>
<span class="t" style="left:295.20px;top:860.02px;font-size:13.50px;color:#312d2a;letter-spacing:0.120px;">2022</span>
<span class="t" style="left:424.79px;top:860.02px;font-size:13.50px;color:#312d2a;letter-spacing:0.120px;">3</span>
<span class="t" style="left:461.15px;top:860.02px;font-size:13.50px;color:#312d2a;letter-spacing:0.120px;">$1,078,012</span>
<span class="t" style="left:558.02px;top:860.02px;font-size:13.50px;color:#312d2a;letter-spacing:0.120px;">$279,270.00</span>
<span class="t" style="left:728.59px;top:860.02px;font-size:13.50px;color:#312d2a;letter-spacing:0.120px;">3</span>
<span class="t" style="left:809.49px;top:860.02px;font-size:13.50px;color:#312d2a;letter-spacing:0.120px;">4</span>
<span class="t" style="left:903.89px;top:860.02px;font-size:13.50px;color:#312d2a;letter-spacing:0.120px;">2</span>
<!-- p_timeline -->
<div class="bx" style="left:961.5px;top:573.69px;height:16.81px;width:596.0px;overflow:hidden"><span class="t" style="left:0;top:0;font-size:17.20px;color:#161513">Schedule Launch Date, Product ID, Submission Number, Schedule Start Year</span></div>
<span class="t" style="left:962.50px;top:609.01px;font-size:14.70px;color:#312d2a;letter-spacing:0.100px;">Project Status:</span><span class="t" style="left:1063.30px;top:609.01px;font-size:14.70px;color:#6f6964;letter-spacing:-0.076px;">Proposed</span>
<div class="bx" style="left:955px;top:628px;width:899px;height:440.5px;background:#fff;border:1px solid #dcdcdc"></div>
<div class="bx" style="left:956px;top:629px;width:896px;height:438px;background:#e4f3dc"></div>
<div class="bx" style="left:956px;top:629px;width:896px;height:1.5px;background:#d9e8d2"></div>
<div class="bx" style="left:985px;top:629px;width:1px;height:438px;background:#d0d6cc"></div>
<div class="bx" style="left:1009.5px;top:630.5px;width:823.5px;height:418px;background:#f9f9f9;border:1px solid #ececec;border-bottom:none"></div>
<div class="bx" style="left:1010px;top:1021px;width:823px;height:27px;background:#f2f2f2"></div>
<div class="bx" style="left:1055.7px;top:1022px;width:1.2px;height:26px;background:#cfcfcf"></div>
<div class="bx" style="left:1281.8px;top:1022px;width:1.2px;height:26px;background:#cfcfcf"></div>
<div class="bx" style="left:1502.4px;top:1022px;width:1.2px;height:26px;background:#cfcfcf"></div>
<div class="bx" style="left:1726.0px;top:1022px;width:1.2px;height:26px;background:#cfcfcf"></div>
<span class="t" style="left:1144.51px;top:1029.74px;font-size:13.60px;color:#333;letter-spacing:0.100px;">October</span>
<span class="t" style="left:1368.01px;top:1029.74px;font-size:13.60px;color:#333;letter-spacing:0.100px;">January</span>
<span class="t" style="left:1600.80px;top:1029.74px;font-size:13.60px;color:#333;letter-spacing:0.100px;">April</span>
<div class="bx" style="left:1011px;top:1055.8px;width:822px;height:3.9px;background:#9e9e9e"></div>
<div class="bx" style="left:1840.2px;top:631px;width:3.8px;height:424px;background:#9e9e9e"></div>
<span class="t" style="left:971.6px;top:656.8px;font-size:13.6px;color:#333;letter-spacing:0.25px;transform:translate(-50%,-50%) rotate(-90deg);">2022</span>
<svg class="bx" style="left:1280px;top:631px" width="4" height="180" viewBox="0 0 4 180"><path d="M2.2 0V176" stroke="#b3b3b3" stroke-width="1.3" stroke-dasharray="3.2 3.2" fill="none"/></svg>
<div class="bx" style="left:1052.3px;top:982px;width:2.2px;height:39px;background:#000"></div>
<div class="bx" style="left:1199.8px;top:916px;width:2.2px;height:105px;background:#000"></div>
<div class="bx" style="left:1281.1px;top:852px;width:2.2px;height:169px;background:#000"></div>
<div class="bx" style="left:1325.2px;top:982px;width:2.2px;height:39px;background:#000"></div>
<div class="bx" style="left:1388.7px;top:789px;width:2.2px;height:232px;background:#000"></div>
<div class="bx" style="left:1563.1px;top:982px;width:2.2px;height:39px;background:#000"></div>
<div class="bx" style="left:1365.3px;top:741.6px;width:222.8px;height:47.6px;background:#fff;border:2.1px solid #000"></div>
<svg class="bx" style="left:1379.8px;top:785.6px" width="20" height="12" viewBox="0 0 20 12"><path d="M2.6 1.5L10 8.8L17.4 1.5" fill="#fff" stroke="#000" stroke-width="2.1"/><path d="M3.5 0.4H16.5V2.4H3.5Z" fill="#fff"/><path d="M4.4 2.5L10 7.6L15.6 2.5Z" fill="#fff"/></svg>
<span class="t" style="left:1372.70px;top:752.08px;font-size:13.20px;color:#4a4a4a;letter-spacing:0.259px;font-weight:bold;">CS00221</span>
<span class="t" style="left:1372.70px;top:768.48px;font-size:13.90px;color:#333;letter-spacing:0.185px;">02/14/2018 Product ID : FIT5121</span>
<div class="bx" style="left:1257.2px;top:805.0px;width:222.8px;height:47.6px;background:#fff;border:2.1px solid #000"></div>
<svg class="bx" style="left:1272.2px;top:849.0px" width="20" height="12" viewBox="0 0 20 12"><path d="M2.6 1.5L10 8.8L17.4 1.5" fill="#fff" stroke="#000" stroke-width="2.1"/><path d="M3.5 0.4H16.5V2.4H3.5Z" fill="#fff"/><path d="M4.4 2.5L10 7.6L15.6 2.5Z" fill="#fff"/></svg>
<span class="t" style="left:1264.60px;top:815.48px;font-size:13.20px;color:#4a4a4a;letter-spacing:0.259px;font-weight:bold;">CS00241</span>
<span class="t" style="left:1264.60px;top:831.88px;font-size:13.90px;color:#333;letter-spacing:0.185px;">01/01/2018 Product ID : FIT5141</span>
<div class="bx" style="left:1176.0px;top:869.0px;width:222.8px;height:47.6px;background:#fff;border:2.1px solid #000"></div>
<svg class="bx" style="left:1190.9px;top:913.0px" width="20" height="12" viewBox="0 0 20 12"><path d="M2.6 1.5L10 8.8L17.4 1.5" fill="#fff" stroke="#000" stroke-width="2.1"/><path d="M3.5 0.4H16.5V2.4H3.5Z" fill="#fff"/><path d="M4.4 2.5L10 7.6L15.6 2.5Z" fill="#fff"/></svg>
<span class="t" style="left:1183.40px;top:879.48px;font-size:13.20px;color:#4a4a4a;letter-spacing:0.259px;font-weight:bold;">CS00124</span>
<span class="t" style="left:1183.40px;top:895.88px;font-size:13.90px;color:#333;letter-spacing:0.219px;">11/29/2017 Product ID : FIT5024</span>
<div class="bx" style="left:1028.5px;top:932.7px;width:222.8px;height:47.6px;background:#fff;border:2.1px solid #000"></div>
<svg class="bx" style="left:1043.4px;top:976.7px" width="20" height="12" viewBox="0 0 20 12"><path d="M2.6 1.5L10 8.8L17.4 1.5" fill="#fff" stroke="#000" stroke-width="2.1"/><path d="M3.5 0.4H16.5V2.4H3.5Z" fill="#fff"/><path d="M4.4 2.5L10 7.6L15.6 2.5Z" fill="#fff"/></svg>
<span class="t" style="left:1035.90px;top:943.18px;font-size:13.20px;color:#4a4a4a;letter-spacing:0.259px;font-weight:bold;">CS00310</span>
<span class="t" style="left:1035.90px;top:959.58px;font-size:13.90px;color:#333;letter-spacing:0.185px;">09/30/2017 Product ID : FIT5210</span>
<div class="bx" style="left:1301.4px;top:932.7px;width:222.8px;height:47.6px;background:#fff;border:2.1px solid #000"></div>
<svg class="bx" style="left:1316.3px;top:976.7px" width="20" height="12" viewBox="0 0 20 12"><path d="M2.6 1.5L10 8.8L17.4 1.5" fill="#fff" stroke="#000" stroke-width="2.1"/><path d="M3.5 0.4H16.5V2.4H3.5Z" fill="#fff"/><path d="M4.4 2.5L10 7.6L15.6 2.5Z" fill="#fff"/></svg>
<span class="t" style="left:1308.80px;top:943.18px;font-size:13.20px;color:#4a4a4a;letter-spacing:0.259px;font-weight:bold;">CS00237</span>
<span class="t" style="left:1308.80px;top:959.58px;font-size:13.90px;color:#333;letter-spacing:0.185px;">01/19/2018 Product ID : FIT5137</span>
<div class="bx" style="left:1539.0px;top:932.7px;width:222.8px;height:47.6px;background:#fff;border:2.1px solid #000"></div>
<svg class="bx" style="left:1554.2px;top:976.7px" width="20" height="12" viewBox="0 0 20 12"><path d="M2.6 1.5L10 8.8L17.4 1.5" fill="#fff" stroke="#000" stroke-width="2.1"/><path d="M3.5 0.4H16.5V2.4H3.5Z" fill="#fff"/><path d="M4.4 2.5L10 7.6L15.6 2.5Z" fill="#fff"/></svg>
<span class="t" style="left:1546.40px;top:943.18px;font-size:13.20px;color:#4a4a4a;letter-spacing:0.259px;font-weight:bold;">CS00246</span>
<span class="t" style="left:1546.40px;top:959.58px;font-size:13.90px;color:#333;letter-spacing:0.185px;">04/26/2018 Product ID : FIT5146</span>
<span class="t" style="left:1288.80px;top:1005.58px;font-size:13.20px;color:#333;letter-spacing:0.645px;font-weight:bold;">2018</span>
<!-- p_overlay -->
<div class="bx" style="left:1793.2px;top:1003px;width:76.8px;height:77px;background:#c0533e"></div>
<svg class="bx" style="left:1800px;top:1015px" width="64" height="54" viewBox="1800 1015 64 54"><path d="M1809.8 1021.2H1853.6a4.5 4.5 0 0 1 4.5 4.5V1050.5a4.5 4.5 0 0 1-4.5 4.5H1817.5L1808.2 1062.6a1.6 1.6 0 0 1-2.9-1V1025.7a4.5 4.5 0 0 1 4.5-4.5Z" fill="#fff"/><circle cx="1816.9" cy="1036.9" r="4.7" fill="#c0533e"/><circle cx="1831.6" cy="1036.9" r="4.7" fill="#c0533e"/><circle cx="1846.1" cy="1036.9" r="4.7" fill="#c0533e"/></svg>
</div>
</body></html>
